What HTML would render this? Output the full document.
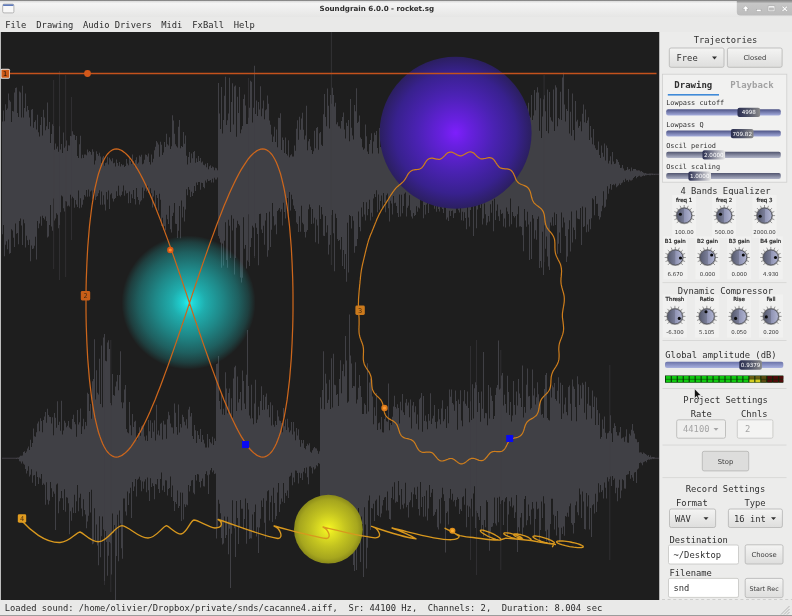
<!DOCTYPE html>
<html lang="en"><head><meta charset="utf-8"><title>Soundgrain 6.0.0 - rocket.sg</title>
<style>html,body{margin:0;padding:0;background:#e9e9e8;overflow:hidden}svg{display:block;will-change:transform}text{white-space:pre}</style></head><body>
<svg width="792" height="616" viewBox="0 0 792 616">
<defs>
<linearGradient id="gTitle" x1="0" y1="0" x2="0" y2="1"><stop offset="0" stop-color="#a8a8a8"/><stop offset="0.08" stop-color="#dedede"/><stop offset="0.2" stop-color="#f4f4f4"/><stop offset="1" stop-color="#e6e6e5"/></linearGradient>
<radialGradient id="gPurple" cx="0.5" cy="0.5" r="0.5"><stop offset="0" stop-color="#7e1ffc"/><stop offset="0.18" stop-color="#6820e0"/><stop offset="0.5" stop-color="#4b22b4"/><stop offset="0.8" stop-color="#38218e"/><stop offset="1" stop-color="#2b1f60"/></radialGradient>
<radialGradient id="gCyan" cx="0.5" cy="0.5" r="0.5"><stop offset="0" stop-color="#24f2f2" stop-opacity="1"/><stop offset="0.08" stop-color="#20eaea" stop-opacity="0.9"/><stop offset="0.25" stop-color="#20eaea" stop-opacity="0.7"/><stop offset="0.5" stop-color="#20eaea" stop-opacity="0.52"/><stop offset="0.75" stop-color="#20eaea" stop-opacity="0.32"/><stop offset="0.9" stop-color="#20eaea" stop-opacity="0.16"/><stop offset="0.97" stop-color="#20eaea" stop-opacity="0.05"/><stop offset="1" stop-color="#20eaea" stop-opacity="0"/></radialGradient>
<radialGradient id="gYellow" cx="0.5" cy="0.5" r="0.5"><stop offset="0" stop-color="#fcfc24"/><stop offset="0.15" stop-color="#e8e822"/><stop offset="0.5" stop-color="#c4c420"/><stop offset="0.85" stop-color="#a6a61e"/><stop offset="1" stop-color="#8a8a1a"/></radialGradient>
<linearGradient id="gTrk1" x1="0" y1="0" x2="0" y2="1"><stop offset="0" stop-color="#4c5284"/><stop offset="1" stop-color="#a4acdc"/></linearGradient>
<linearGradient id="gTrk2" x1="0" y1="0" x2="0" y2="1"><stop offset="0" stop-color="#50546e"/><stop offset="1" stop-color="#b0b4c8"/></linearGradient>
<linearGradient id="gTrk3" x1="0" y1="0" x2="0" y2="1"><stop offset="0" stop-color="#6a72a8"/><stop offset="1" stop-color="#aab2e0"/></linearGradient>
<linearGradient id="gKnobA" x1="0" y1="0" x2="1" y2="0"><stop offset="0" stop-color="#2a2e50"/><stop offset="0.5" stop-color="#505468"/><stop offset="1" stop-color="#8a8a8a"/></linearGradient>
<linearGradient id="gKnobB" x1="0" y1="0" x2="1" y2="0"><stop offset="0" stop-color="#2a2e50"/><stop offset="0.5" stop-color="#8a8c9c"/><stop offset="1" stop-color="#e8e8e8"/></linearGradient>
<linearGradient id="gDial" x1="0" y1="0" x2="1" y2="0"><stop offset="0" stop-color="#565a6e"/><stop offset="0.5" stop-color="#7a7e98"/><stop offset="0.52" stop-color="#9094b4"/><stop offset="1" stop-color="#b2b6d2"/></linearGradient>
<linearGradient id="gBtn" x1="0" y1="0" x2="0" y2="1"><stop offset="0" stop-color="#f4f4f3"/><stop offset="1" stop-color="#dededd"/></linearGradient>
</defs>
<rect x="0" y="0" width="792" height="616" fill="#e9e9e8"/>
<rect x="0" y="0" width="792" height="17" fill="url(#gTitle)"/>
<rect x="0" y="0" width="792" height="0.8" fill="#7c7c7c"/>
<text x="376.8" y="10.9" font-family='"DejaVu Sans","Liberation Sans",sans-serif' font-weight="bold" font-size="7.15" fill="#2e2e2e" text-anchor="middle">Soundgrain 6.0.0 - rocket.sg</text>
<rect x="2.7" y="4.1" width="11.2" height="8.8" rx="1.3" fill="#f8f8f8" stroke="#a4a4a4" stroke-width="0.8"/><rect x="3.1" y="4.4" width="10.4" height="1.5" fill="#4e6cb4"/>
<linearGradient id="gWB" x1="0" y1="0" x2="0" y2="1"><stop offset="0" stop-color="#8c8c8c"/><stop offset="0.18" stop-color="#c6c6c6"/><stop offset="1" stop-color="#bcbcbc"/></linearGradient>
<path d="M736.8 0.8 H792 V15.6 H740.5 Q736.8 15.6 736.8 12 Z" fill="url(#gWB)"/>
<g fill="#ffffff" stroke="#8e8e8e" stroke-width="0.35"><path d="M745.7 5.8l3.2 3.2h-2v2.4h-2.4v-2.4h-2z"/><rect x="756.4" y="9.3" width="4.6" height="2.2"/><path d="M768.2 5.9h6.5v5.6h-6.5zM769.4 7.8v2.5h4.1v-2.5z" fill-rule="evenodd"/><path d="M781.8 6.9l1-1 1.95 1.95 1.95-1.95 1 1-1.95 1.95 1.95 1.95-1 1-1.95-1.95-1.95 1.95-1-1 1.95-1.95z"/></g>
<rect x="0" y="17" width="792" height="15" fill="#e9e9e8"/>
<text x="5.2" y="27.5" font-family='"DejaVu Sans Mono","Liberation Mono",monospace' font-size="8.8" fill="#2a2a2a">File</text>
<text x="36.3" y="27.5" font-family='"DejaVu Sans Mono","Liberation Mono",monospace' font-size="8.8" fill="#2a2a2a">Drawing</text>
<text x="83" y="27.5" font-family='"DejaVu Sans Mono","Liberation Mono",monospace' font-size="8.8" fill="#2a2a2a">Audio Drivers</text>
<text x="161.2" y="27.5" font-family='"DejaVu Sans Mono","Liberation Mono",monospace' font-size="8.8" fill="#2a2a2a">Midi</text>
<text x="192.3" y="27.5" font-family='"DejaVu Sans Mono","Liberation Mono",monospace' font-size="8.8" fill="#2a2a2a">FxBall</text>
<text x="233.7" y="27.5" font-family='"DejaVu Sans Mono","Liberation Mono",monospace' font-size="8.8" fill="#2a2a2a">Help</text>
<rect x="0" y="32" width="1" height="568" fill="#bdbdbd"/>
<rect x="1" y="32" width="658.5" height="568" fill="#1e1e1e"/>
<clipPath id="cv"><rect x="1" y="32" width="658.5" height="568"/></clipPath>
<g clip-path="url(#cv)">
<filter id="wb" x="0" y="30" width="662" height="572" filterUnits="userSpaceOnUse"><feGaussianBlur stdDeviation="0.42 0.3"/></filter><g filter="url(#wb)">
<path d="M2.0 121.4 L3.0 121.4 L3.0 110.4 L4.0 110.4 L4.0 121.2 L5.0 121.2 L5.0 104.2 L6.0 104.2 L6.0 110.1 L7.0 110.1 L7.0 108.4 L8.0 108.4 L8.0 93.4 L9.0 93.4 L9.0 100.3 L10.0 100.3 L10.0 101.7 L11.0 101.7 L11.0 122.1 L12.0 122.1 L12.0 111.0 L13.0 111.0 L13.0 111.4 L14.0 111.4 L14.0 92.6 L15.0 92.6 L15.0 88.0 L16.0 88.0 L16.0 87.6 L17.0 87.6 L17.0 113.0 L18.0 113.0 L18.0 117.0 L19.0 117.0 L19.0 91.5 L20.0 91.5 L20.0 92.6 L21.0 92.6 L21.0 117.4 L22.0 117.4 L22.0 85.7 L23.0 85.7 L23.0 117.6 L24.0 117.6 L24.0 108.1 L25.0 108.1 L25.0 93.6 L26.0 93.6 L26.0 111.5 L27.0 111.5 L27.0 105.9 L28.0 105.9 L28.0 110.1 L29.0 110.1 L29.0 117.6 L30.0 117.6 L30.0 126.2 L31.0 126.2 L31.0 109.7 L32.0 109.7 L32.0 109.1 L33.0 109.1 L33.0 127.7 L34.0 127.7 L34.0 122.1 L35.0 122.1 L35.0 120.3 L36.0 120.3 L36.0 129.4 L37.0 129.4 L37.0 114.7 L38.0 114.7 L38.0 132.2 L39.0 132.2 L39.0 136.4 L40.0 136.4 L40.0 124.9 L41.0 124.9 L41.0 117.0 L42.0 117.0 L42.0 135.5 L43.0 135.5 L43.0 109.8 L44.0 109.8 L44.0 117.4 L45.0 117.4 L45.0 130.2 L46.0 130.2 L46.0 126.3 L47.0 126.3 L47.0 102.4 L48.0 102.4 L48.0 129.1 L49.0 129.1 L49.0 122.1 L50.0 122.1 L50.0 143.0 L51.0 143.0 L51.0 133.9 L52.0 133.9 L52.0 124.3 L53.0 124.3 L53.0 125.9 L54.0 125.9 L54.0 149.8 L55.0 149.8 L55.0 143.6 L56.0 143.6 L56.0 148.8 L57.0 148.8 L57.0 146.6 L58.0 146.6 L58.0 151.8 L59.0 151.8 L59.0 126.2 L60.0 126.2 L60.0 149.5 L61.0 149.5 L61.0 144.0 L62.0 144.0 L62.0 153.1 L63.0 153.1 L63.0 132.5 L64.0 132.5 L64.0 147.8 L65.0 147.8 L65.0 146.3 L66.0 146.3 L66.0 140.4 L67.0 140.4 L67.0 150.9 L68.0 150.9 L68.0 145.2 L69.0 145.2 L69.0 145.4 L70.0 145.4 L70.0 136.0 L71.0 136.0 L71.0 136.3 L72.0 136.3 L72.0 131.2 L73.0 131.2 L73.0 134.6 L74.0 134.6 L74.0 134.9 L75.0 134.9 L75.0 140.0 L76.0 140.0 L76.0 135.9 L77.0 135.9 L77.0 156.1 L78.0 156.1 L78.0 158.1 L79.0 158.1 L79.0 144.3 L80.0 144.3 L80.0 135.7 L81.0 135.7 L81.0 158.3 L82.0 158.3 L82.0 154.7 L83.0 154.7 L83.0 158.0 L84.0 158.0 L84.0 154.5 L85.0 154.5 L85.0 154.6 L86.0 154.6 L86.0 155.2 L87.0 155.2 L87.0 149.4 L88.0 149.4 L88.0 152.2 L89.0 152.2 L89.0 150.9 L90.0 150.9 L90.0 152.0 L91.0 152.0 L91.0 154.8 L92.0 154.8 L92.0 149.2 L93.0 149.2 L93.0 151.7 L94.0 151.7 L94.0 164.4 L95.0 164.4 L95.0 160.5 L96.0 160.5 L96.0 151.3 L97.0 151.3 L97.0 153.9 L98.0 153.9 L98.0 155.8 L99.0 155.8 L99.0 152.7 L100.0 152.7 L100.0 156.5 L101.0 156.5 L101.0 163.1 L102.0 163.1 L102.0 157.5 L103.0 157.5 L103.0 155.9 L104.0 155.9 L104.0 165.7 L105.0 165.7 L105.0 163.0 L106.0 163.0 L106.0 162.4 L107.0 162.4 L107.0 156.7 L108.0 156.7 L108.0 164.6 L109.0 164.6 L109.0 157.8 L110.0 157.8 L110.0 159.5 L111.0 159.5 L111.0 161.2 L112.0 161.2 L112.0 158.2 L113.0 158.2 L113.0 163.3 L114.0 163.3 L114.0 162.8 L115.0 162.8 L115.0 166.6 L116.0 166.6 L116.0 159.5 L117.0 159.5 L117.0 163.0 L118.0 163.0 L118.0 165.8 L119.0 165.8 L119.0 161.9 L120.0 161.9 L120.0 166.6 L121.0 166.6 L121.0 164.1 L122.0 164.1 L122.0 165.3 L123.0 165.3 L123.0 164.8 L124.0 164.8 L124.0 166.9 L125.0 166.9 L125.0 165.9 L126.0 165.9 L126.0 159.0 L127.0 159.0 L127.0 163.4 L128.0 163.4 L128.0 165.3 L129.0 165.3 L129.0 157.4 L130.0 157.4 L130.0 160.9 L131.0 160.9 L131.0 163.9 L132.0 163.9 L132.0 154.6 L133.0 154.6 L133.0 161.1 L134.0 161.1 L134.0 166.3 L135.0 166.3 L135.0 160.1 L136.0 160.1 L136.0 157.2 L137.0 157.2 L137.0 163.8 L138.0 163.8 L138.0 162.6 L139.0 162.6 L139.0 155.5 L140.0 155.5 L140.0 156.7 L141.0 156.7 L141.0 154.7 L142.0 154.7 L142.0 164.3 L143.0 164.3 L143.0 163.5 L144.0 163.5 L144.0 159.8 L145.0 159.8 L145.0 154.6 L146.0 154.6 L146.0 154.9 L147.0 154.9 L147.0 156.6 L148.0 156.6 L148.0 153.6 L149.0 153.6 L149.0 162.0 L150.0 162.0 L150.0 164.4 L151.0 164.4 L151.0 154.6 L152.0 154.6 L152.0 162.3 L153.0 162.3 L153.0 158.8 L154.0 158.8 L154.0 150.2 L155.0 150.2 L155.0 146.8 L156.0 146.8 L156.0 141.0 L157.0 141.0 L157.0 142.5 L158.0 142.5 L158.0 144.5 L159.0 144.5 L159.0 156.7 L160.0 156.7 L160.0 141.7 L161.0 141.7 L161.0 144.8 L162.0 144.8 L162.0 154.9 L163.0 154.9 L163.0 152.4 L164.0 152.4 L164.0 142.0 L165.0 142.0 L165.0 147.0 L166.0 147.0 L166.0 133.8 L167.0 133.8 L167.0 144.2 L168.0 144.2 L168.0 145.6 L169.0 145.6 L169.0 137.3 L170.0 137.3 L170.0 149.0 L171.0 149.0 L171.0 146.2 L172.0 146.2 L172.0 115.3 L173.0 115.3 L173.0 120.6 L174.0 120.6 L174.0 133.7 L175.0 133.7 L175.0 144.3 L176.0 144.3 L176.0 146.3 L177.0 146.3 L177.0 147.4 L178.0 147.4 L178.0 126.7 L179.0 126.7 L179.0 120.0 L180.0 120.0 L180.0 148.3 L181.0 148.3 L181.0 146.0 L182.0 146.0 L182.0 146.9 L183.0 146.9 L183.0 132.0 L184.0 132.0 L184.0 143.8 L185.0 143.8 L185.0 135.4 L186.0 135.4 L186.0 155.8 L187.0 155.8 L187.0 164.6 L188.0 164.6 L188.0 157.1 L189.0 157.1 L189.0 152.0 L190.0 152.0 L190.0 162.8 L191.0 162.8 L191.0 153.5 L192.0 153.5 L192.0 158.3 L193.0 158.3 L193.0 152.0 L194.0 152.0 L194.0 151.0 L195.0 151.0 L195.0 162.7 L196.0 162.7 L196.0 158.3 L197.0 158.3 L197.0 162.0 L198.0 162.0 L198.0 156.0 L199.0 156.0 L199.0 161.1 L200.0 161.1 L200.0 157.9 L201.0 157.9 L201.0 162.6 L202.0 162.6 L202.0 161.5 L203.0 161.5 L203.0 164.7 L204.0 164.7 L204.0 165.2 L205.0 165.2 L205.0 163.7 L206.0 163.7 L206.0 167.2 L207.0 167.2 L207.0 162.9 L208.0 162.9 L208.0 169.3 L209.0 169.3 L209.0 166.3 L210.0 166.3 L210.0 165.2 L211.0 165.2 L211.0 168.1 L212.0 168.1 L212.0 166.5 L213.0 166.5 L213.0 167.2 L214.0 167.2 L214.0 170.2 L215.0 170.2 L215.0 167.8 L216.0 167.8 L216.0 168.3 L217.0 168.3 L217.0 170.3 L218.0 170.3 L218.0 83.0 L219.0 83.0 L219.0 113.4 L220.0 113.4 L220.0 128.9 L221.0 128.9 L221.0 86.9 L222.0 86.9 L222.0 133.6 L223.0 133.6 L223.0 119.9 L224.0 119.9 L224.0 95.8 L225.0 95.8 L225.0 76.8 L226.0 76.8 L226.0 125.1 L227.0 125.1 L227.0 120.2 L228.0 120.2 L228.0 113.5 L229.0 113.5 L229.0 77.8 L230.0 77.8 L230.0 132.1 L231.0 132.1 L231.0 102.0 L232.0 102.0 L232.0 83.3 L233.0 83.3 L233.0 124.6 L234.0 124.6 L234.0 86.4 L235.0 86.4 L235.0 85.5 L236.0 85.5 L236.0 136.8 L237.0 136.8 L237.0 96.7 L238.0 96.7 L238.0 112.9 L239.0 112.9 L239.0 87.1 L240.0 87.1 L240.0 133.3 L241.0 133.3 L241.0 129.6 L242.0 129.6 L242.0 126.0 L243.0 126.0 L243.0 98.9 L244.0 98.9 L244.0 94.4 L245.0 94.4 L245.0 105.4 L246.0 105.4 L246.0 123.9 L247.0 123.9 L247.0 124.0 L248.0 124.0 L248.0 117.8 L249.0 117.8 L249.0 107.7 L250.0 107.7 L250.0 80.7 L251.0 80.7 L251.0 81.7 L252.0 81.7 L252.0 122.4 L253.0 122.4 L253.0 107.8 L254.0 107.8 L254.0 65.7 L255.0 65.7 L255.0 113.9 L256.0 113.9 L256.0 100.5 L257.0 100.5 L257.0 116.1 L258.0 116.1 L258.0 102.1 L259.0 102.1 L259.0 109.6 L260.0 109.6 L260.0 86.3 L261.0 86.3 L261.0 116.3 L262.0 116.3 L262.0 108.4 L263.0 108.4 L263.0 100.5 L264.0 100.5 L264.0 119.2 L265.0 119.2 L265.0 110.2 L266.0 110.2 L266.0 109.3 L267.0 109.3 L267.0 95.6 L268.0 95.6 L268.0 103.8 L269.0 103.8 L269.0 120.6 L270.0 120.6 L270.0 124.8 L271.0 124.8 L271.0 134.5 L272.0 134.5 L272.0 142.0 L273.0 142.0 L273.0 136.6 L274.0 136.6 L274.0 126.7 L275.0 126.7 L275.0 142.1 L276.0 142.1 L276.0 129.4 L277.0 129.4 L277.0 147.3 L278.0 147.3 L278.0 117.7 L279.0 117.7 L279.0 117.9 L280.0 117.9 L280.0 113.2 L281.0 113.2 L281.0 150.0 L282.0 150.0 L282.0 137.6 L283.0 137.6 L283.0 140.1 L284.0 140.1 L284.0 152.9 L285.0 152.9 L285.0 137.6 L286.0 137.6 L286.0 153.9 L287.0 153.9 L287.0 155.4 L288.0 155.4 L288.0 140.3 L289.0 140.3 L289.0 157.3 L290.0 157.3 L290.0 155.2 L291.0 155.2 L291.0 154.3 L292.0 154.3 L292.0 156.4 L293.0 156.4 L293.0 156.6 L294.0 156.6 L294.0 145.4 L295.0 145.4 L295.0 150.7 L296.0 150.7 L296.0 128.8 L297.0 128.8 L297.0 120.3 L298.0 120.3 L298.0 139.7 L299.0 139.7 L299.0 116.8 L300.0 116.8 L300.0 129.8 L301.0 129.8 L301.0 118.6 L302.0 118.6 L302.0 112.7 L303.0 112.7 L303.0 129.7 L304.0 129.7 L304.0 139.5 L305.0 139.5 L305.0 135.5 L306.0 135.5 L306.0 105.8 L307.0 105.8 L307.0 150.3 L308.0 150.3 L308.0 141.3 L309.0 141.3 L309.0 139.0 L310.0 139.0 L310.0 146.4 L311.0 146.4 L311.0 150.1 L312.0 150.1 L312.0 153.9 L313.0 153.9 L313.0 151.2 L314.0 151.2 L314.0 130.7 L315.0 130.7 L315.0 148.2 L316.0 148.2 L316.0 128.0 L317.0 128.0 L317.0 127.1 L318.0 127.1 L318.0 149.7 L319.0 149.7 L319.0 133.2 L320.0 133.2 L320.0 132.0 L321.0 132.0 L321.0 144.7 L322.0 144.7 L322.0 145.9 L323.0 145.9 L323.0 114.2 L324.0 114.2 L324.0 94.0 L325.0 94.0 L325.0 117.1 L326.0 117.1 L326.0 126.2 L327.0 126.2 L327.0 88.5 L328.0 88.5 L328.0 105.8 L329.0 105.8 L329.0 128.4 L330.0 128.4 L330.0 95.1 L331.0 95.1 L331.0 103.8 L332.0 103.8 L332.0 87.8 L333.0 87.8 L333.0 95.0 L334.0 95.0 L334.0 106.4 L335.0 106.4 L335.0 102.8 L336.0 102.8 L336.0 124.2 L337.0 124.2 L337.0 122.2 L338.0 122.2 L338.0 126.3 L339.0 126.3 L339.0 126.2 L340.0 126.2 L340.0 128.4 L341.0 128.4 L341.0 121.0 L342.0 121.0 L342.0 117.0 L343.0 117.0 L343.0 112.4 L344.0 112.4 L344.0 129.5 L345.0 129.5 L345.0 138.5 L346.0 138.5 L346.0 122.8 L347.0 122.8 L347.0 126.0 L348.0 126.0 L348.0 120.1 L349.0 120.1 L349.0 141.2 L350.0 141.2 L350.0 99.0 L351.0 99.0 L351.0 127.7 L352.0 127.7 L352.0 135.6 L353.0 135.6 L353.0 139.4 L354.0 139.4 L354.0 104.9 L355.0 104.9 L355.0 111.3 L356.0 111.3 L356.0 88.2 L357.0 88.2 L357.0 123.1 L358.0 123.1 L358.0 121.8 L359.0 121.8 L359.0 115.6 L360.0 115.6 L360.0 137.6 L361.0 137.6 L361.0 139.1 L362.0 139.1 L362.0 147.3 L363.0 147.3 L363.0 149.8 L364.0 149.8 L364.0 148.4 L365.0 148.4 L365.0 124.6 L366.0 124.6 L366.0 136.2 L367.0 136.2 L367.0 151.5 L368.0 151.5 L368.0 154.1 L369.0 154.1 L369.0 143.9 L370.0 143.9 L370.0 140.1 L371.0 140.1 L371.0 133.2 L372.0 133.2 L372.0 153.6 L373.0 153.6 L373.0 141.6 L374.0 141.6 L374.0 132.8 L375.0 132.8 L375.0 135.0 L376.0 135.0 L376.0 131.1 L377.0 131.1 L377.0 147.9 L378.0 147.9 L378.0 153.4 L379.0 153.4 L379.0 128.1 L380.0 128.1 L380.0 146.9 L381.0 146.9 L381.0 143.9 L382.0 143.9 L382.0 127.1 L383.0 127.1 L383.0 148.1 L384.0 148.1 L384.0 128.2 L385.0 128.2 L385.0 143.3 L386.0 143.3 L386.0 147.6 L387.0 147.6 L387.0 147.3 L388.0 147.3 L388.0 145.2 L389.0 145.2 L389.0 149.6 L390.0 149.6 L390.0 147.4 L391.0 147.4 L391.0 148.5 L392.0 148.5 L392.0 149.5 L393.0 149.5 L393.0 136.7 L394.0 136.7 L394.0 134.7 L395.0 134.7 L395.0 134.8 L396.0 134.8 L396.0 156.5 L397.0 156.5 L397.0 145.5 L398.0 145.5 L398.0 130.3 L399.0 130.3 L399.0 135.3 L400.0 135.3 L400.0 133.6 L401.0 133.6 L401.0 154.8 L402.0 154.8 L402.0 144.2 L403.0 144.2 L403.0 137.4 L404.0 137.4 L404.0 130.8 L405.0 130.8 L405.0 148.6 L406.0 148.6 L406.0 125.1 L407.0 125.1 L407.0 136.7 L408.0 136.7 L408.0 128.2 L409.0 128.2 L409.0 151.0 L410.0 151.0 L410.0 145.3 L411.0 145.3 L411.0 138.0 L412.0 138.0 L412.0 151.8 L413.0 151.8 L413.0 148.3 L414.0 148.3 L414.0 150.2 L415.0 150.2 L415.0 156.6 L416.0 156.6 L416.0 149.3 L417.0 149.3 L417.0 156.5 L418.0 156.5 L418.0 136.1 L419.0 136.1 L419.0 144.9 L420.0 144.9 L420.0 147.5 L421.0 147.5 L421.0 152.0 L422.0 152.0 L422.0 148.2 L423.0 148.2 L423.0 155.2 L424.0 155.2 L424.0 153.3 L425.0 153.3 L425.0 150.7 L426.0 150.7 L426.0 156.9 L427.0 156.9 L427.0 136.1 L428.0 136.1 L428.0 141.3 L429.0 141.3 L429.0 147.5 L430.0 147.5 L430.0 141.8 L431.0 141.8 L431.0 153.5 L432.0 153.5 L432.0 136.2 L433.0 136.2 L433.0 150.0 L434.0 150.0 L434.0 149.5 L435.0 149.5 L435.0 152.3 L436.0 152.3 L436.0 130.8 L437.0 130.8 L437.0 140.2 L438.0 140.2 L438.0 153.8 L439.0 153.8 L439.0 137.7 L440.0 137.7 L440.0 139.9 L441.0 139.9 L441.0 148.3 L442.0 148.3 L442.0 138.1 L443.0 138.1 L443.0 144.3 L444.0 144.3 L444.0 148.1 L445.0 148.1 L445.0 156.4 L446.0 156.4 L446.0 141.4 L447.0 141.4 L447.0 140.3 L448.0 140.3 L448.0 132.2 L449.0 132.2 L449.0 144.5 L450.0 144.5 L450.0 132.3 L451.0 132.3 L451.0 145.6 L452.0 145.6 L452.0 136.7 L453.0 136.7 L453.0 144.7 L454.0 144.7 L454.0 144.2 L455.0 144.2 L455.0 130.9 L456.0 130.9 L456.0 140.0 L457.0 140.0 L457.0 126.0 L458.0 126.0 L458.0 118.3 L459.0 118.3 L459.0 150.2 L460.0 150.2 L460.0 141.3 L461.0 141.3 L461.0 143.6 L462.0 143.6 L462.0 126.8 L463.0 126.8 L463.0 124.1 L464.0 124.1 L464.0 117.4 L465.0 117.4 L465.0 140.8 L466.0 140.8 L466.0 128.7 L467.0 128.7 L467.0 152.1 L468.0 152.1 L468.0 131.7 L469.0 131.7 L469.0 137.9 L470.0 137.9 L470.0 138.6 L471.0 138.6 L471.0 125.7 L472.0 125.7 L472.0 149.0 L473.0 149.0 L473.0 132.5 L474.0 132.5 L474.0 127.7 L475.0 127.7 L475.0 142.4 L476.0 142.4 L476.0 137.2 L477.0 137.2 L477.0 140.2 L478.0 140.2 L478.0 137.6 L479.0 137.6 L479.0 144.2 L480.0 144.2 L480.0 131.9 L481.0 131.9 L481.0 146.6 L482.0 146.6 L482.0 124.8 L483.0 124.8 L483.0 132.7 L484.0 132.7 L484.0 128.6 L485.0 128.6 L485.0 147.3 L486.0 147.3 L486.0 119.6 L487.0 119.6 L487.0 142.6 L488.0 142.6 L488.0 123.8 L489.0 123.8 L489.0 144.2 L490.0 144.2 L490.0 114.3 L491.0 114.3 L491.0 124.4 L492.0 124.4 L492.0 143.1 L493.0 143.1 L493.0 133.2 L494.0 133.2 L494.0 150.4 L495.0 150.4 L495.0 129.3 L496.0 129.3 L496.0 125.2 L497.0 125.2 L497.0 147.6 L498.0 147.6 L498.0 142.0 L499.0 142.0 L499.0 146.9 L500.0 146.9 L500.0 128.4 L501.0 128.4 L501.0 129.5 L502.0 129.5 L502.0 125.8 L503.0 125.8 L503.0 133.2 L504.0 133.2 L504.0 118.2 L505.0 118.2 L505.0 105.7 L506.0 105.7 L506.0 120.5 L507.0 120.5 L507.0 125.7 L508.0 125.7 L508.0 135.9 L509.0 135.9 L509.0 110.9 L510.0 110.9 L510.0 137.3 L511.0 137.3 L511.0 112.6 L512.0 112.6 L512.0 143.3 L513.0 143.3 L513.0 136.3 L514.0 136.3 L514.0 116.4 L515.0 116.4 L515.0 146.6 L516.0 146.6 L516.0 134.9 L517.0 134.9 L517.0 148.5 L518.0 148.5 L518.0 143.4 L519.0 143.4 L519.0 125.1 L520.0 125.1 L520.0 121.2 L521.0 121.2 L521.0 126.2 L522.0 126.2 L522.0 120.5 L523.0 120.5 L523.0 146.9 L524.0 146.9 L524.0 114.5 L525.0 114.5 L525.0 146.0 L526.0 146.0 L526.0 106.3 L527.0 106.3 L527.0 110.5 L528.0 110.5 L528.0 102.8 L529.0 102.8 L529.0 115.9 L530.0 115.9 L530.0 117.5 L531.0 117.5 L531.0 95.1 L532.0 95.1 L532.0 120.1 L533.0 120.1 L533.0 115.6 L534.0 115.6 L534.0 90.0 L535.0 90.0 L535.0 110.3 L536.0 110.3 L536.0 92.6 L537.0 92.6 L537.0 87.2 L538.0 87.2 L538.0 92.4 L539.0 92.4 L539.0 130.7 L540.0 130.7 L540.0 98.2 L541.0 98.2 L541.0 138.1 L542.0 138.1 L542.0 116.5 L543.0 116.5 L543.0 99.2 L544.0 99.2 L544.0 95.3 L545.0 95.3 L545.0 111.2 L546.0 111.2 L546.0 131.1 L547.0 131.1 L547.0 89.5 L548.0 89.5 L548.0 133.3 L549.0 133.3 L549.0 92.1 L550.0 92.1 L550.0 117.3 L551.0 117.3 L551.0 120.5 L552.0 120.5 L552.0 121.8 L553.0 121.8 L553.0 89.5 L554.0 89.5 L554.0 131.0 L555.0 131.0 L555.0 85.3 L556.0 85.3 L556.0 87.4 L557.0 87.4 L557.0 126.2 L558.0 126.2 L558.0 117.9 L559.0 117.9 L559.0 119.2 L560.0 119.2 L560.0 91.8 L561.0 91.8 L561.0 119.9 L562.0 119.9 L562.0 77.4 L563.0 77.4 L563.0 72.7 L564.0 72.7 L564.0 104.4 L565.0 104.4 L565.0 121.5 L566.0 121.5 L566.0 109.1 L567.0 109.1 L567.0 111.1 L568.0 111.1 L568.0 89.0 L569.0 89.0 L569.0 133.4 L570.0 133.4 L570.0 111.8 L571.0 111.8 L571.0 135.8 L572.0 135.8 L572.0 93.6 L573.0 93.6 L573.0 130.0 L574.0 130.0 L574.0 140.2 L575.0 140.2 L575.0 101.1 L576.0 101.1 L576.0 121.4 L577.0 121.4 L577.0 119.8 L578.0 119.8 L578.0 127.8 L579.0 127.8 L579.0 126.0 L580.0 126.0 L580.0 121.6 L581.0 121.6 L581.0 131.2 L582.0 131.2 L582.0 113.8 L583.0 113.8 L583.0 104.5 L584.0 104.5 L584.0 122.2 L585.0 122.2 L585.0 109.6 L586.0 109.6 L586.0 123.1 L587.0 123.1 L587.0 120.5 L588.0 120.5 L588.0 117.3 L589.0 117.3 L589.0 140.0 L590.0 140.0 L590.0 126.0 L591.0 126.0 L591.0 137.6 L592.0 137.6 L592.0 144.3 L593.0 144.3 L593.0 129.0 L594.0 129.0 L594.0 145.2 L595.0 145.2 L595.0 148.3 L596.0 148.3 L596.0 150.0 L597.0 150.0 L597.0 149.7 L598.0 149.7 L598.0 141.4 L599.0 141.4 L599.0 155.1 L600.0 155.1 L600.0 158.1 L601.0 158.1 L601.0 145.4 L602.0 145.4 L602.0 152.7 L603.0 152.7 L603.0 156.8 L604.0 156.8 L604.0 143.6 L605.0 143.6 L605.0 160.4 L606.0 160.4 L606.0 145.5 L607.0 145.5 L607.0 147.9 L608.0 147.9 L608.0 163.4 L609.0 163.4 L609.0 160.7 L610.0 160.7 L610.0 156.3 L611.0 156.3 L611.0 164.3 L612.0 164.3 L612.0 151.9 L613.0 151.9 L613.0 161.6 L614.0 161.6 L614.0 164.0 L615.0 164.0 L615.0 163.5 L616.0 163.5 L616.0 159.0 L617.0 159.0 L617.0 159.8 L618.0 159.8 L618.0 161.9 L619.0 161.9 L619.0 164.8 L620.0 164.8 L620.0 168.1 L621.0 168.1 L621.0 167.7 L622.0 167.7 L622.0 165.1 L623.0 165.1 L623.0 168.5 L624.0 168.5 L624.0 170.6 L625.0 170.6 L625.0 170.6 L626.0 170.6 L626.0 170.1 L627.0 170.1 L627.0 167.0 L628.0 167.0 L628.0 169.5 L629.0 169.5 L629.0 169.0 L630.0 169.0 L630.0 171.2 L631.0 171.2 L631.0 167.6 L632.0 167.6 L632.0 170.8 L633.0 170.8 L633.0 168.9 L634.0 168.9 L634.0 169.1 L635.0 169.1 L635.0 169.0 L636.0 169.0 L636.0 170.3 L637.0 170.3 L637.0 170.5 L638.0 170.5 L638.0 170.2 L639.0 170.2 L639.0 170.4 L640.0 170.4 L640.0 171.4 L641.0 171.4 L641.0 171.1 L642.0 171.1 L642.0 171.9 L643.0 171.9 L643.0 172.7 L644.0 172.7 L644.0 173.2 L645.0 173.2 L645.0 173.0 L646.0 173.0 L646.0 173.6 L647.0 173.6 L647.0 173.7 L648.0 173.7 L648.0 173.8 L649.0 173.8 L649.0 173.6 L650.0 173.6 L650.0 173.4 L651.0 173.4 L651.0 173.4 L652.0 173.4 L652.0 173.4 L653.0 173.4 L653.0 173.8 L654.0 173.8 L654.0 173.8 L655.0 173.8 L655.0 173.8 L656.0 173.8 L656.0 173.8 L657.0 173.8 L657.0 173.8 L658.0 173.8 L658.0 173.8 L659.0 173.8 L659.0 174.8 L658.0 174.8 L658.0 174.8 L657.0 174.8 L657.0 174.8 L656.0 174.8 L656.0 174.8 L655.0 174.8 L655.0 175.1 L654.0 175.1 L654.0 174.8 L653.0 174.8 L653.0 175.0 L652.0 175.0 L652.0 174.8 L651.0 174.8 L651.0 175.2 L650.0 175.2 L650.0 175.2 L649.0 175.2 L649.0 175.0 L648.0 175.0 L648.0 174.9 L647.0 174.9 L647.0 175.3 L646.0 175.3 L646.0 175.3 L645.0 175.3 L645.0 176.0 L644.0 176.0 L644.0 175.5 L643.0 175.5 L643.0 176.1 L642.0 176.1 L642.0 176.7 L641.0 176.7 L641.0 176.7 L640.0 176.7 L640.0 175.7 L639.0 175.7 L639.0 176.2 L638.0 176.2 L638.0 177.0 L637.0 177.0 L637.0 178.3 L636.0 178.3 L636.0 176.1 L635.0 176.1 L635.0 177.0 L634.0 177.0 L634.0 178.1 L633.0 178.1 L633.0 179.7 L632.0 179.7 L632.0 180.5 L631.0 180.5 L631.0 180.6 L630.0 180.6 L630.0 179.7 L629.0 179.7 L629.0 181.7 L628.0 181.7 L628.0 179.9 L627.0 179.9 L627.0 180.4 L626.0 180.4 L626.0 178.8 L625.0 178.8 L625.0 182.1 L624.0 182.1 L624.0 180.2 L623.0 180.2 L623.0 182.6 L622.0 182.6 L622.0 183.3 L621.0 183.3 L621.0 184.9 L620.0 184.9 L620.0 183.6 L619.0 183.6 L619.0 185.2 L618.0 185.2 L618.0 186.2 L617.0 186.2 L617.0 187.3 L616.0 187.3 L616.0 183.8 L615.0 183.8 L615.0 185.2 L614.0 185.2 L614.0 184.2 L613.0 184.2 L613.0 185.1 L612.0 185.1 L612.0 189.8 L611.0 189.8 L611.0 183.9 L610.0 183.9 L610.0 188.7 L609.0 188.7 L609.0 193.8 L608.0 193.8 L608.0 186.2 L607.0 186.2 L607.0 199.5 L606.0 199.5 L606.0 206.7 L605.0 206.7 L605.0 207.8 L604.0 207.8 L604.0 191.3 L603.0 191.3 L603.0 205.8 L602.0 205.8 L602.0 211.3 L601.0 211.3 L601.0 217.3 L600.0 217.3 L600.0 219.5 L599.0 219.5 L599.0 215.9 L598.0 215.9 L598.0 203.7 L597.0 203.7 L597.0 204.1 L596.0 204.1 L596.0 196.1 L595.0 196.1 L595.0 215.3 L594.0 215.3 L594.0 199.4 L593.0 199.4 L593.0 198.2 L592.0 198.2 L592.0 218.2 L591.0 218.2 L591.0 229.2 L590.0 229.2 L590.0 219.2 L589.0 219.2 L589.0 231.8 L588.0 231.8 L588.0 224.4 L587.0 224.4 L587.0 232.2 L586.0 232.2 L586.0 207.4 L585.0 207.4 L585.0 226.3 L584.0 226.3 L584.0 227.1 L583.0 227.1 L583.0 206.6 L582.0 206.6 L582.0 244.9 L581.0 244.9 L581.0 207.9 L580.0 207.9 L580.0 219.3 L579.0 219.3 L579.0 218.9 L578.0 218.9 L578.0 218.5 L577.0 218.5 L577.0 210.5 L576.0 210.5 L576.0 239.3 L575.0 239.3 L575.0 230.1 L574.0 230.1 L574.0 227.5 L573.0 227.5 L573.0 242.6 L572.0 242.6 L572.0 211.5 L571.0 211.5 L571.0 251.5 L570.0 251.5 L570.0 220.3 L569.0 220.3 L569.0 229.2 L568.0 229.2 L568.0 256.4 L567.0 256.4 L567.0 262.0 L566.0 262.0 L566.0 235.9 L565.0 235.9 L565.0 222.6 L564.0 222.6 L564.0 217.4 L563.0 217.4 L563.0 227.4 L562.0 227.4 L562.0 212.6 L561.0 212.6 L561.0 253.1 L560.0 253.1 L560.0 232.4 L559.0 232.4 L559.0 243.8 L558.0 243.8 L558.0 253.7 L557.0 253.7 L557.0 214.0 L556.0 214.0 L556.0 225.0 L555.0 225.0 L555.0 212.6 L554.0 212.6 L554.0 225.7 L553.0 225.7 L553.0 217.3 L552.0 217.3 L552.0 225.5 L551.0 225.5 L551.0 222.4 L550.0 222.4 L550.0 270.1 L549.0 270.1 L549.0 266.6 L548.0 266.6 L548.0 256.4 L547.0 256.4 L547.0 236.5 L546.0 236.5 L546.0 248.8 L545.0 248.8 L545.0 225.3 L544.0 225.3 L544.0 275.0 L543.0 275.0 L543.0 231.7 L542.0 231.7 L542.0 267.4 L541.0 267.4 L541.0 260.9 L540.0 260.9 L540.0 267.9 L539.0 267.9 L539.0 216.4 L538.0 216.4 L538.0 218.9 L537.0 218.9 L537.0 239.8 L536.0 239.8 L536.0 230.2 L535.0 230.2 L535.0 238.7 L534.0 238.7 L534.0 218.5 L533.0 218.5 L533.0 215.0 L532.0 215.0 L532.0 259.1 L531.0 259.1 L531.0 221.8 L530.0 221.8 L530.0 260.0 L529.0 260.0 L529.0 224.5 L528.0 224.5 L528.0 211.7 L527.0 211.7 L527.0 226.7 L526.0 226.7 L526.0 220.6 L525.0 220.6 L525.0 209.0 L524.0 209.0 L524.0 251.3 L523.0 251.3 L523.0 235.3 L522.0 235.3 L522.0 227.0 L521.0 227.0 L521.0 226.3 L520.0 226.3 L520.0 226.4 L519.0 226.4 L519.0 206.3 L518.0 206.3 L518.0 214.2 L517.0 214.2 L517.0 227.6 L516.0 227.6 L516.0 216.0 L515.0 216.0 L515.0 217.5 L514.0 217.5 L514.0 216.1 L513.0 216.1 L513.0 212.1 L512.0 212.1 L512.0 224.2 L511.0 224.2 L511.0 198.4 L510.0 198.4 L510.0 226.6 L509.0 226.6 L509.0 214.0 L508.0 214.0 L508.0 211.6 L507.0 211.6 L507.0 207.4 L506.0 207.4 L506.0 227.6 L505.0 227.6 L505.0 218.5 L504.0 218.5 L504.0 226.5 L503.0 226.5 L503.0 213.2 L502.0 213.2 L502.0 214.0 L501.0 214.0 L501.0 209.7 L500.0 209.7 L500.0 221.0 L499.0 221.0 L499.0 216.2 L498.0 216.2 L498.0 204.4 L497.0 204.4 L497.0 210.8 L496.0 210.8 L496.0 219.9 L495.0 219.9 L495.0 198.8 L494.0 198.8 L494.0 231.2 L493.0 231.2 L493.0 200.8 L492.0 200.8 L492.0 212.7 L491.0 212.7 L491.0 204.3 L490.0 204.3 L490.0 221.5 L489.0 221.5 L489.0 215.9 L488.0 215.9 L488.0 222.5 L487.0 222.5 L487.0 225.3 L486.0 225.3 L486.0 214.2 L485.0 214.2 L485.0 203.4 L484.0 203.4 L484.0 218.6 L483.0 218.6 L483.0 224.6 L482.0 224.6 L482.0 197.4 L481.0 197.4 L481.0 208.0 L480.0 208.0 L480.0 199.0 L479.0 199.0 L479.0 205.0 L478.0 205.0 L478.0 209.5 L477.0 209.5 L477.0 228.3 L476.0 228.3 L476.0 200.1 L475.0 200.1 L475.0 205.7 L474.0 205.7 L474.0 236.0 L473.0 236.0 L473.0 205.9 L472.0 205.9 L472.0 199.4 L471.0 199.4 L471.0 210.1 L470.0 210.1 L470.0 226.5 L469.0 226.5 L469.0 217.5 L468.0 217.5 L468.0 200.3 L467.0 200.3 L467.0 229.3 L466.0 229.3 L466.0 218.0 L465.0 218.0 L465.0 212.2 L464.0 212.2 L464.0 220.8 L463.0 220.8 L463.0 211.7 L462.0 211.7 L462.0 220.3 L461.0 220.3 L461.0 198.2 L460.0 198.2 L460.0 212.4 L459.0 212.4 L459.0 210.3 L458.0 210.3 L458.0 196.3 L457.0 196.3 L457.0 205.4 L456.0 205.4 L456.0 213.1 L455.0 213.1 L455.0 213.3 L454.0 213.3 L454.0 217.9 L453.0 217.9 L453.0 210.5 L452.0 210.5 L452.0 211.1 L451.0 211.1 L451.0 216.1 L450.0 216.1 L450.0 210.8 L449.0 210.8 L449.0 221.0 L448.0 221.0 L448.0 217.4 L447.0 217.4 L447.0 219.4 L446.0 219.4 L446.0 205.0 L445.0 205.0 L445.0 197.6 L444.0 197.6 L444.0 213.0 L443.0 213.0 L443.0 208.9 L442.0 208.9 L442.0 207.3 L441.0 207.3 L441.0 191.4 L440.0 191.4 L440.0 211.4 L439.0 211.4 L439.0 209.0 L438.0 209.0 L438.0 195.7 L437.0 195.7 L437.0 211.8 L436.0 211.8 L436.0 205.8 L435.0 205.8 L435.0 208.7 L434.0 208.7 L434.0 192.7 L433.0 192.7 L433.0 191.2 L432.0 191.2 L432.0 203.5 L431.0 203.5 L431.0 197.9 L430.0 197.9 L430.0 203.9 L429.0 203.9 L429.0 212.9 L428.0 212.9 L428.0 198.5 L427.0 198.5 L427.0 204.4 L426.0 204.4 L426.0 214.6 L425.0 214.6 L425.0 205.0 L424.0 205.0 L424.0 218.3 L423.0 218.3 L423.0 199.0 L422.0 199.0 L422.0 195.9 L421.0 195.9 L421.0 199.3 L420.0 199.3 L420.0 208.5 L419.0 208.5 L419.0 207.4 L418.0 207.4 L418.0 211.7 L417.0 211.7 L417.0 206.2 L416.0 206.2 L416.0 215.1 L415.0 215.1 L415.0 216.0 L414.0 216.0 L414.0 213.0 L413.0 213.0 L413.0 218.5 L412.0 218.5 L412.0 216.6 L411.0 216.6 L411.0 210.3 L410.0 210.3 L410.0 195.2 L409.0 195.2 L409.0 205.7 L408.0 205.7 L408.0 207.7 L407.0 207.7 L407.0 216.6 L406.0 216.6 L406.0 192.5 L405.0 192.5 L405.0 193.8 L404.0 193.8 L404.0 205.9 L403.0 205.9 L403.0 213.2 L402.0 213.2 L402.0 194.8 L401.0 194.8 L401.0 216.5 L400.0 216.5 L400.0 194.6 L399.0 194.6 L399.0 217.1 L398.0 217.1 L398.0 212.9 L397.0 212.9 L397.0 206.0 L396.0 206.0 L396.0 202.7 L395.0 202.7 L395.0 203.3 L394.0 203.3 L394.0 196.1 L393.0 196.1 L393.0 214.6 L392.0 214.6 L392.0 203.4 L391.0 203.4 L391.0 200.8 L390.0 200.8 L390.0 221.4 L389.0 221.4 L389.0 208.3 L388.0 208.3 L388.0 193.5 L387.0 193.5 L387.0 195.2 L386.0 195.2 L386.0 212.3 L385.0 212.3 L385.0 202.7 L384.0 202.7 L384.0 192.9 L383.0 192.9 L383.0 208.2 L382.0 208.2 L382.0 195.5 L381.0 195.5 L381.0 201.1 L380.0 201.1 L380.0 209.8 L379.0 209.8 L379.0 194.4 L378.0 194.4 L378.0 212.3 L377.0 212.3 L377.0 190.3 L376.0 190.3 L376.0 196.9 L375.0 196.9 L375.0 193.9 L374.0 193.9 L374.0 198.5 L373.0 198.5 L373.0 216.7 L372.0 216.7 L372.0 212.7 L371.0 212.7 L371.0 220.5 L370.0 220.5 L370.0 199.7 L369.0 199.7 L369.0 209.0 L368.0 209.0 L368.0 215.2 L367.0 215.2 L367.0 202.2 L366.0 202.2 L366.0 220.6 L365.0 220.6 L365.0 214.5 L364.0 214.5 L364.0 201.9 L363.0 201.9 L363.0 216.8 L362.0 216.8 L362.0 207.5 L361.0 207.5 L361.0 231.2 L360.0 231.2 L360.0 227.0 L359.0 227.0 L359.0 211.5 L358.0 211.5 L358.0 239.1 L357.0 239.1 L357.0 245.9 L356.0 245.9 L356.0 246.3 L355.0 246.3 L355.0 252.7 L354.0 252.7 L354.0 220.8 L353.0 220.8 L353.0 216.3 L352.0 216.3 L352.0 228.6 L351.0 228.6 L351.0 216.0 L350.0 216.0 L350.0 214.9 L349.0 214.9 L349.0 272.5 L348.0 272.5 L348.0 222.7 L347.0 222.7 L347.0 281.7 L346.0 281.7 L346.0 254.0 L345.0 254.0 L345.0 269.0 L344.0 269.0 L344.0 250.0 L343.0 250.0 L343.0 266.1 L342.0 266.1 L342.0 237.0 L341.0 237.0 L341.0 249.5 L340.0 249.5 L340.0 239.9 L339.0 239.9 L339.0 240.9 L338.0 240.9 L338.0 238.9 L337.0 238.9 L337.0 218.1 L336.0 218.1 L336.0 213.7 L335.0 213.7 L335.0 271.3 L334.0 271.3 L334.0 233.3 L333.0 233.3 L333.0 209.9 L332.0 209.9 L332.0 214.9 L331.0 214.9 L331.0 234.9 L330.0 234.9 L330.0 244.8 L329.0 244.8 L329.0 254.4 L328.0 254.4 L328.0 225.3 L327.0 225.3 L327.0 232.4 L326.0 232.4 L326.0 216.0 L325.0 216.0 L325.0 235.9 L324.0 235.9 L324.0 235.7 L323.0 235.7 L323.0 214.4 L322.0 214.4 L322.0 206.9 L321.0 206.9 L321.0 219.1 L320.0 219.1 L320.0 205.3 L319.0 205.3 L319.0 243.7 L318.0 243.7 L318.0 225.4 L317.0 225.4 L317.0 219.6 L316.0 219.6 L316.0 242.3 L315.0 242.3 L315.0 217.8 L314.0 217.8 L314.0 223.5 L313.0 223.5 L313.0 209.1 L312.0 209.1 L312.0 224.1 L311.0 224.1 L311.0 207.2 L310.0 207.2 L310.0 204.5 L309.0 204.5 L309.0 209.2 L308.0 209.2 L308.0 229.9 L307.0 229.9 L307.0 231.7 L306.0 231.7 L306.0 237.4 L305.0 237.4 L305.0 231.9 L304.0 231.9 L304.0 224.3 L303.0 224.3 L303.0 222.7 L302.0 222.7 L302.0 205.7 L301.0 205.7 L301.0 231.7 L300.0 231.7 L300.0 216.2 L299.0 216.2 L299.0 232.0 L298.0 232.0 L298.0 224.0 L297.0 224.0 L297.0 222.6 L296.0 222.6 L296.0 211.1 L295.0 211.1 L295.0 209.0 L294.0 209.0 L294.0 205.6 L293.0 205.6 L293.0 199.2 L292.0 199.2 L292.0 194.8 L291.0 194.8 L291.0 210.5 L290.0 210.5 L290.0 192.1 L289.0 192.1 L289.0 216.3 L288.0 216.3 L288.0 197.9 L287.0 197.9 L287.0 204.7 L286.0 204.7 L286.0 218.6 L285.0 218.6 L285.0 212.0 L284.0 212.0 L284.0 202.8 L283.0 202.8 L283.0 225.6 L282.0 225.6 L282.0 209.2 L281.0 209.2 L281.0 211.7 L280.0 211.7 L280.0 208.0 L279.0 208.0 L279.0 209.7 L278.0 209.7 L278.0 211.1 L277.0 211.1 L277.0 234.3 L276.0 234.3 L276.0 224.5 L275.0 224.5 L275.0 225.4 L274.0 225.4 L274.0 216.2 L273.0 216.2 L273.0 203.1 L272.0 203.1 L272.0 229.8 L271.0 229.8 L271.0 246.9 L270.0 246.9 L270.0 211.8 L269.0 211.8 L269.0 250.2 L268.0 250.2 L268.0 256.7 L267.0 256.7 L267.0 213.1 L266.0 213.1 L266.0 220.5 L265.0 220.5 L265.0 244.8 L264.0 244.8 L264.0 225.7 L263.0 225.7 L263.0 233.1 L262.0 233.1 L262.0 229.6 L261.0 229.6 L261.0 213.7 L260.0 213.7 L260.0 214.0 L259.0 214.0 L259.0 265.3 L258.0 265.3 L258.0 233.9 L257.0 233.9 L257.0 227.7 L256.0 227.7 L256.0 223.3 L255.0 223.3 L255.0 255.9 L254.0 255.9 L254.0 227.4 L253.0 227.4 L253.0 225.7 L252.0 225.7 L252.0 237.9 L251.0 237.9 L251.0 246.9 L250.0 246.9 L250.0 266.0 L249.0 266.0 L249.0 214.3 L248.0 214.3 L248.0 260.6 L247.0 260.6 L247.0 268.5 L246.0 268.5 L246.0 245.0 L245.0 245.0 L245.0 248.7 L244.0 248.7 L244.0 217.2 L243.0 217.2 L243.0 277.7 L242.0 277.7 L242.0 282.4 L241.0 282.4 L241.0 277.6 L240.0 277.6 L240.0 225.4 L239.0 225.4 L239.0 224.1 L238.0 224.1 L238.0 220.7 L237.0 220.7 L237.0 227.8 L236.0 227.8 L236.0 257.9 L235.0 257.9 L235.0 274.6 L234.0 274.6 L234.0 218.7 L233.0 218.7 L233.0 230.4 L232.0 230.4 L232.0 215.3 L231.0 215.3 L231.0 258.0 L230.0 258.0 L230.0 225.7 L229.0 225.7 L229.0 219.7 L228.0 219.7 L228.0 267.7 L227.0 267.7 L227.0 259.9 L226.0 259.9 L226.0 222.3 L225.0 222.3 L225.0 240.7 L224.0 240.7 L224.0 265.5 L223.0 265.5 L223.0 243.6 L222.0 243.6 L222.0 267.7 L221.0 267.7 L221.0 242.4 L220.0 242.4 L220.0 238.5 L219.0 238.5 L219.0 236.0 L218.0 236.0 L218.0 177.4 L217.0 177.4 L217.0 179.5 L216.0 179.5 L216.0 179.4 L215.0 179.4 L215.0 177.7 L214.0 177.7 L214.0 182.4 L213.0 182.4 L213.0 178.8 L212.0 178.8 L212.0 182.4 L211.0 182.4 L211.0 180.1 L210.0 180.1 L210.0 180.7 L209.0 180.7 L209.0 181.1 L208.0 181.1 L208.0 179.3 L207.0 179.3 L207.0 182.5 L206.0 182.5 L206.0 180.5 L205.0 180.5 L205.0 188.2 L204.0 188.2 L204.0 187.1 L203.0 187.1 L203.0 182.9 L202.0 182.9 L202.0 182.8 L201.0 182.8 L201.0 189.8 L200.0 189.8 L200.0 182.1 L199.0 182.1 L199.0 182.1 L198.0 182.1 L198.0 185.0 L197.0 185.0 L197.0 182.4 L196.0 182.4 L196.0 191.1 L195.0 191.1 L195.0 186.0 L194.0 186.0 L194.0 192.9 L193.0 192.9 L193.0 196.0 L192.0 196.0 L192.0 191.7 L191.0 191.7 L191.0 197.0 L190.0 197.0 L190.0 189.8 L189.0 189.8 L189.0 187.0 L188.0 187.0 L188.0 195.2 L187.0 195.2 L187.0 189.3 L186.0 189.3 L186.0 209.6 L185.0 209.6 L185.0 221.5 L184.0 221.5 L184.0 206.7 L183.0 206.7 L183.0 217.6 L182.0 217.6 L182.0 200.6 L181.0 200.6 L181.0 238.3 L180.0 238.3 L180.0 205.9 L179.0 205.9 L179.0 230.7 L178.0 230.7 L178.0 237.9 L177.0 237.9 L177.0 223.9 L176.0 223.9 L176.0 223.8 L175.0 223.8 L175.0 203.1 L174.0 203.1 L174.0 212.7 L173.0 212.7 L173.0 216.0 L172.0 216.0 L172.0 232.4 L171.0 232.4 L171.0 229.3 L170.0 229.3 L170.0 205.7 L169.0 205.7 L169.0 224.0 L168.0 224.0 L168.0 219.2 L167.0 219.2 L167.0 214.7 L166.0 214.7 L166.0 230.6 L165.0 230.6 L165.0 225.9 L164.0 225.9 L164.0 230.0 L163.0 230.0 L163.0 217.8 L162.0 217.8 L162.0 225.9 L161.0 225.9 L161.0 199.7 L160.0 199.7 L160.0 193.7 L159.0 193.7 L159.0 210.5 L158.0 210.5 L158.0 198.1 L157.0 198.1 L157.0 194.9 L156.0 194.9 L156.0 206.1 L155.0 206.1 L155.0 190.4 L154.0 190.4 L154.0 196.4 L153.0 196.4 L153.0 207.6 L152.0 207.6 L152.0 193.2 L151.0 193.2 L151.0 188.3 L150.0 188.3 L150.0 192.1 L149.0 192.1 L149.0 193.0 L148.0 193.0 L148.0 185.7 L147.0 185.7 L147.0 191.6 L146.0 191.6 L146.0 188.5 L145.0 188.5 L145.0 190.8 L144.0 190.8 L144.0 198.3 L143.0 198.3 L143.0 187.5 L142.0 187.5 L142.0 200.2 L141.0 200.2 L141.0 201.6 L140.0 201.6 L140.0 204.5 L139.0 204.5 L139.0 200.0 L138.0 200.0 L138.0 197.0 L137.0 197.0 L137.0 188.0 L136.0 188.0 L136.0 204.5 L135.0 204.5 L135.0 198.9 L134.0 198.9 L134.0 189.9 L133.0 189.9 L133.0 198.2 L132.0 198.2 L132.0 194.3 L131.0 194.3 L131.0 202.9 L130.0 202.9 L130.0 191.5 L129.0 191.5 L129.0 203.2 L128.0 203.2 L128.0 193.0 L127.0 193.0 L127.0 193.6 L126.0 193.6 L126.0 190.4 L125.0 190.4 L125.0 195.8 L124.0 195.8 L124.0 185.6 L123.0 185.6 L123.0 191.6 L122.0 191.6 L122.0 195.1 L121.0 195.1 L121.0 196.6 L120.0 196.6 L120.0 195.5 L119.0 195.5 L119.0 185.8 L118.0 185.8 L118.0 195.9 L117.0 195.9 L117.0 191.3 L116.0 191.3 L116.0 198.1 L115.0 198.1 L115.0 198.9 L114.0 198.9 L114.0 201.4 L113.0 201.4 L113.0 198.4 L112.0 198.4 L112.0 193.3 L111.0 193.3 L111.0 194.4 L110.0 194.4 L110.0 209.0 L109.0 209.0 L109.0 190.6 L108.0 190.6 L108.0 199.4 L107.0 199.4 L107.0 192.1 L106.0 192.1 L106.0 210.5 L105.0 210.5 L105.0 204.5 L104.0 204.5 L104.0 195.3 L103.0 195.3 L103.0 204.7 L102.0 204.7 L102.0 191.4 L101.0 191.4 L101.0 204.8 L100.0 204.8 L100.0 190.3 L99.0 190.3 L99.0 193.2 L98.0 193.2 L98.0 196.0 L97.0 196.0 L97.0 196.7 L96.0 196.7 L96.0 200.1 L95.0 200.1 L95.0 192.8 L94.0 192.8 L94.0 190.8 L93.0 190.8 L93.0 199.3 L92.0 199.3 L92.0 190.6 L91.0 190.6 L91.0 191.4 L90.0 191.4 L90.0 196.4 L89.0 196.4 L89.0 189.6 L88.0 189.6 L88.0 196.7 L87.0 196.7 L87.0 190.0 L86.0 190.0 L86.0 196.5 L85.0 196.5 L85.0 194.9 L84.0 194.9 L84.0 199.8 L83.0 199.8 L83.0 204.8 L82.0 204.8 L82.0 207.5 L81.0 207.5 L81.0 198.3 L80.0 198.3 L80.0 208.3 L79.0 208.3 L79.0 190.5 L78.0 190.5 L78.0 206.9 L77.0 206.9 L77.0 204.6 L76.0 204.6 L76.0 200.0 L75.0 200.0 L75.0 207.7 L74.0 207.7 L74.0 198.3 L73.0 198.3 L73.0 196.7 L72.0 196.7 L72.0 198.4 L71.0 198.4 L71.0 194.8 L70.0 194.8 L70.0 206.6 L69.0 206.6 L69.0 205.6 L68.0 205.6 L68.0 206.3 L67.0 206.3 L67.0 201.4 L66.0 201.4 L66.0 201.0 L65.0 201.0 L65.0 211.4 L64.0 211.4 L64.0 208.2 L63.0 208.2 L63.0 196.5 L62.0 196.5 L62.0 195.5 L61.0 195.5 L61.0 212.2 L60.0 212.2 L60.0 225.0 L59.0 225.0 L59.0 228.3 L58.0 228.3 L58.0 214.8 L57.0 214.8 L57.0 213.3 L56.0 213.3 L56.0 218.5 L55.0 218.5 L55.0 220.6 L54.0 220.6 L54.0 198.4 L53.0 198.4 L53.0 230.8 L52.0 230.8 L52.0 226.4 L51.0 226.4 L51.0 205.1 L50.0 205.1 L50.0 225.1 L49.0 225.1 L49.0 236.5 L48.0 236.5 L48.0 237.4 L47.0 237.4 L47.0 220.9 L46.0 220.9 L46.0 216.6 L45.0 216.6 L45.0 219.6 L44.0 219.6 L44.0 217.9 L43.0 217.9 L43.0 215.7 L42.0 215.7 L42.0 225.7 L41.0 225.7 L41.0 216.6 L40.0 216.6 L40.0 223.4 L39.0 223.4 L39.0 228.2 L38.0 228.2 L38.0 221.0 L37.0 221.0 L37.0 259.4 L36.0 259.4 L36.0 236.7 L35.0 236.7 L35.0 245.8 L34.0 245.8 L34.0 248.4 L33.0 248.4 L33.0 249.0 L32.0 249.0 L32.0 245.5 L31.0 245.5 L31.0 261.2 L30.0 261.2 L30.0 239.8 L29.0 239.8 L29.0 244.9 L28.0 244.9 L28.0 240.2 L27.0 240.2 L27.0 235.7 L26.0 235.7 L26.0 247.6 L25.0 247.6 L25.0 223.2 L24.0 223.2 L24.0 219.4 L23.0 219.4 L23.0 245.0 L22.0 245.0 L22.0 225.6 L21.0 225.6 L21.0 218.4 L20.0 218.4 L20.0 220.9 L19.0 220.9 L19.0 244.2 L18.0 244.2 L18.0 232.9 L17.0 232.9 L17.0 233.7 L16.0 233.7 L16.0 223.6 L15.0 223.6 L15.0 246.9 L14.0 246.9 L14.0 237.8 L13.0 237.8 L13.0 230.6 L12.0 230.6 L12.0 229.3 L11.0 229.3 L11.0 253.0 L10.0 253.0 L10.0 253.7 L9.0 253.7 L9.0 239.6 L8.0 239.6 L8.0 249.2 L7.0 249.2 L7.0 241.3 L6.0 241.3 L6.0 244.8 L5.0 244.8 L5.0 256.3 L4.0 256.3 L4.0 224.9 L3.0 224.9 L3.0 234.2 L2.0 234.2Z" fill="#403f44"/>
<path d="M2.0 457.7 L3.0 457.7 L3.0 457.7 L4.0 457.7 L4.0 457.7 L5.0 457.7 L5.0 457.7 L6.0 457.7 L6.0 457.7 L7.0 457.7 L7.0 457.7 L8.0 457.7 L8.0 457.7 L9.0 457.7 L9.0 457.7 L10.0 457.7 L10.0 457.7 L11.0 457.7 L11.0 457.7 L12.0 457.7 L12.0 457.7 L13.0 457.7 L13.0 457.7 L14.0 457.7 L14.0 457.7 L15.0 457.7 L15.0 457.7 L16.0 457.7 L16.0 457.7 L17.0 457.7 L17.0 457.5 L18.0 457.5 L18.0 457.5 L19.0 457.5 L19.0 456.7 L20.0 456.7 L20.0 455.8 L21.0 455.8 L21.0 455.8 L22.0 455.8 L22.0 455.5 L23.0 455.5 L23.0 452.1 L24.0 452.1 L24.0 451.2 L25.0 451.2 L25.0 453.1 L26.0 453.1 L26.0 451.6 L27.0 451.6 L27.0 448.5 L28.0 448.5 L28.0 446.6 L29.0 446.6 L29.0 449.9 L30.0 449.9 L30.0 439.8 L31.0 439.8 L31.0 447.0 L32.0 447.0 L32.0 442.9 L33.0 442.9 L33.0 428.5 L34.0 428.5 L34.0 436.3 L35.0 436.3 L35.0 436.7 L36.0 436.7 L36.0 432.3 L37.0 432.3 L37.0 423.4 L38.0 423.4 L38.0 421.6 L39.0 421.6 L39.0 431.3 L40.0 431.3 L40.0 418.3 L41.0 418.3 L41.0 421.1 L42.0 421.1 L42.0 432.3 L43.0 432.3 L43.0 419.9 L44.0 419.9 L44.0 416.6 L45.0 416.6 L45.0 411.9 L46.0 411.9 L46.0 422.8 L47.0 422.8 L47.0 408.7 L48.0 408.7 L48.0 415.1 L49.0 415.1 L49.0 416.7 L50.0 416.7 L50.0 417.0 L51.0 417.0 L51.0 423.6 L52.0 423.6 L52.0 417.3 L53.0 417.3 L53.0 435.3 L54.0 435.3 L54.0 413.0 L55.0 413.0 L55.0 417.8 L56.0 417.8 L56.0 427.8 L57.0 427.8 L57.0 401.3 L58.0 401.3 L58.0 425.0 L59.0 425.0 L59.0 421.8 L60.0 421.8 L60.0 430.8 L61.0 430.8 L61.0 400.8 L62.0 400.8 L62.0 434.6 L63.0 434.6 L63.0 430.6 L64.0 430.6 L64.0 420.8 L65.0 420.8 L65.0 422.8 L66.0 422.8 L66.0 427.3 L67.0 427.3 L67.0 425.7 L68.0 425.7 L68.0 420.9 L69.0 420.9 L69.0 427.6 L70.0 427.6 L70.0 428.7 L71.0 428.7 L71.0 429.3 L72.0 429.3 L72.0 418.9 L73.0 418.9 L73.0 414.8 L74.0 414.8 L74.0 422.0 L75.0 422.0 L75.0 424.3 L76.0 424.3 L76.0 436.7 L77.0 436.7 L77.0 409.9 L78.0 409.9 L78.0 424.6 L79.0 424.6 L79.0 422.2 L80.0 422.2 L80.0 408.5 L81.0 408.5 L81.0 434.0 L82.0 434.0 L82.0 426.3 L83.0 426.3 L83.0 418.7 L84.0 418.7 L84.0 429.2 L85.0 429.2 L85.0 422.0 L86.0 422.0 L86.0 425.8 L87.0 425.8 L87.0 392.7 L88.0 392.7 L88.0 394.0 L89.0 394.0 L89.0 411.0 L90.0 411.0 L90.0 404.0 L91.0 404.0 L91.0 418.7 L92.0 418.7 L92.0 381.2 L93.0 381.2 L93.0 379.0 L94.0 379.0 L94.0 339.2 L95.0 339.2 L95.0 399.4 L96.0 399.4 L96.0 370.2 L97.0 370.2 L97.0 392.8 L98.0 392.8 L98.0 394.4 L99.0 394.4 L99.0 358.8 L100.0 358.8 L100.0 404.1 L101.0 404.1 L101.0 345.5 L102.0 345.5 L102.0 407.3 L103.0 407.3 L103.0 337.4 L104.0 337.4 L104.0 334.0 L105.0 334.0 L105.0 360.8 L106.0 360.8 L106.0 361.2 L107.0 361.2 L107.0 342.6 L108.0 342.6 L108.0 340.2 L109.0 340.2 L109.0 348.9 L110.0 348.9 L110.0 403.1 L111.0 403.1 L111.0 405.2 L112.0 405.2 L112.0 373.9 L113.0 373.9 L113.0 394.9 L114.0 394.9 L114.0 395.8 L115.0 395.8 L115.0 386.6 L116.0 386.6 L116.0 381.5 L117.0 381.5 L117.0 375.1 L118.0 375.1 L118.0 390.3 L119.0 390.3 L119.0 375.1 L120.0 375.1 L120.0 351.3 L121.0 351.3 L121.0 402.2 L122.0 402.2 L122.0 408.2 L123.0 408.2 L123.0 402.4 L124.0 402.4 L124.0 389.4 L125.0 389.4 L125.0 385.1 L126.0 385.1 L126.0 429.1 L127.0 429.1 L127.0 432.2 L128.0 432.2 L128.0 433.3 L129.0 433.3 L129.0 402.1 L130.0 402.1 L130.0 425.2 L131.0 425.2 L131.0 435.2 L132.0 435.2 L132.0 414.1 L133.0 414.1 L133.0 426.9 L134.0 426.9 L134.0 421.7 L135.0 421.7 L135.0 420.8 L136.0 420.8 L136.0 439.9 L137.0 439.9 L137.0 439.4 L138.0 439.4 L138.0 433.0 L139.0 433.0 L139.0 427.2 L140.0 427.2 L140.0 435.8 L141.0 435.8 L141.0 426.2 L142.0 426.2 L142.0 425.3 L143.0 425.3 L143.0 427.3 L144.0 427.3 L144.0 436.4 L145.0 436.4 L145.0 440.6 L146.0 440.6 L146.0 435.5 L147.0 435.5 L147.0 441.1 L148.0 441.1 L148.0 420.1 L149.0 420.1 L149.0 431.3 L150.0 431.3 L150.0 420.3 L151.0 420.3 L151.0 437.9 L152.0 437.9 L152.0 422.8 L153.0 422.8 L153.0 431.8 L154.0 431.8 L154.0 420.2 L155.0 420.2 L155.0 440.6 L156.0 440.6 L156.0 404.7 L157.0 404.7 L157.0 434.4 L158.0 434.4 L158.0 430.5 L159.0 430.5 L159.0 435.5 L160.0 435.5 L160.0 423.7 L161.0 423.7 L161.0 422.7 L162.0 422.7 L162.0 439.6 L163.0 439.6 L163.0 420.7 L164.0 420.7 L164.0 424.4 L165.0 424.4 L165.0 424.4 L166.0 424.4 L166.0 438.8 L167.0 438.8 L167.0 419.3 L168.0 419.3 L168.0 411.7 L169.0 411.7 L169.0 415.2 L170.0 415.2 L170.0 423.6 L171.0 423.6 L171.0 427.2 L172.0 427.2 L172.0 427.4 L173.0 427.4 L173.0 433.6 L174.0 433.6 L174.0 403.5 L175.0 403.5 L175.0 412.8 L176.0 412.8 L176.0 427.1 L177.0 427.1 L177.0 434.8 L178.0 434.8 L178.0 404.4 L179.0 404.4 L179.0 432.4 L180.0 432.4 L180.0 424.0 L181.0 424.0 L181.0 427.5 L182.0 427.5 L182.0 414.8 L183.0 414.8 L183.0 416.9 L184.0 416.9 L184.0 421.7 L185.0 421.7 L185.0 425.3 L186.0 425.3 L186.0 419.3 L187.0 419.3 L187.0 428.5 L188.0 428.5 L188.0 409.4 L189.0 409.4 L189.0 406.7 L190.0 406.7 L190.0 416.4 L191.0 416.4 L191.0 413.0 L192.0 413.0 L192.0 436.0 L193.0 436.0 L193.0 439.1 L194.0 439.1 L194.0 425.0 L195.0 425.0 L195.0 430.2 L196.0 430.2 L196.0 442.9 L197.0 442.9 L197.0 431.0 L198.0 431.0 L198.0 434.9 L199.0 434.9 L199.0 439.1 L200.0 439.1 L200.0 429.0 L201.0 429.0 L201.0 442.0 L202.0 442.0 L202.0 434.9 L203.0 434.9 L203.0 439.8 L204.0 439.8 L204.0 443.6 L205.0 443.6 L205.0 447.4 L206.0 447.4 L206.0 447.4 L207.0 447.4 L207.0 434.1 L208.0 434.1 L208.0 447.6 L209.0 447.6 L209.0 438.9 L210.0 438.9 L210.0 442.3 L211.0 442.3 L211.0 443.6 L212.0 443.6 L212.0 436.7 L213.0 436.7 L213.0 444.9 L214.0 444.9 L214.0 438.6 L215.0 438.6 L215.0 441.0 L216.0 441.0 L216.0 364.0 L217.0 364.0 L217.0 363.4 L218.0 363.4 L218.0 356.1 L219.0 356.1 L219.0 401.0 L220.0 401.0 L220.0 409.2 L221.0 409.2 L221.0 393.1 L222.0 393.1 L222.0 414.4 L223.0 414.4 L223.0 408.7 L224.0 408.7 L224.0 415.1 L225.0 415.1 L225.0 372.2 L226.0 372.2 L226.0 388.6 L227.0 388.6 L227.0 413.3 L228.0 413.3 L228.0 393.1 L229.0 393.1 L229.0 388.5 L230.0 388.5 L230.0 413.7 L231.0 413.7 L231.0 398.2 L232.0 398.2 L232.0 417.8 L233.0 417.8 L233.0 378.6 L234.0 378.6 L234.0 367.2 L235.0 367.2 L235.0 365.7 L236.0 365.7 L236.0 411.1 L237.0 411.1 L237.0 376.6 L238.0 376.6 L238.0 402.5 L239.0 402.5 L239.0 398.9 L240.0 398.9 L240.0 392.1 L241.0 392.1 L241.0 410.2 L242.0 410.2 L242.0 370.5 L243.0 370.5 L243.0 380.9 L244.0 380.9 L244.0 403.6 L245.0 403.6 L245.0 409.0 L246.0 409.0 L246.0 374.7 L247.0 374.7 L247.0 329.9 L248.0 329.9 L248.0 386.1 L249.0 386.1 L249.0 415.4 L250.0 415.4 L250.0 418.4 L251.0 418.4 L251.0 384.8 L252.0 384.8 L252.0 418.2 L253.0 418.2 L253.0 424.2 L254.0 424.2 L254.0 403.6 L255.0 403.6 L255.0 379.7 L256.0 379.7 L256.0 423.1 L257.0 423.1 L257.0 419.4 L258.0 419.4 L258.0 406.8 L259.0 406.8 L259.0 415.2 L260.0 415.2 L260.0 401.1 L261.0 401.1 L261.0 386.3 L262.0 386.3 L262.0 409.9 L263.0 409.9 L263.0 395.0 L264.0 395.0 L264.0 409.8 L265.0 409.8 L265.0 396.8 L266.0 396.8 L266.0 393.5 L267.0 393.5 L267.0 409.2 L268.0 409.2 L268.0 405.1 L269.0 405.1 L269.0 417.2 L270.0 417.2 L270.0 402.3 L271.0 402.3 L271.0 425.5 L272.0 425.5 L272.0 405.2 L273.0 405.2 L273.0 424.8 L274.0 424.8 L274.0 426.8 L275.0 426.8 L275.0 420.9 L276.0 420.9 L276.0 424.9 L277.0 424.9 L277.0 410.3 L278.0 410.3 L278.0 416.4 L279.0 416.4 L279.0 420.5 L280.0 420.5 L280.0 421.0 L281.0 421.0 L281.0 423.1 L282.0 423.1 L282.0 432.2 L283.0 432.2 L283.0 407.9 L284.0 407.9 L284.0 426.3 L285.0 426.3 L285.0 419.4 L286.0 419.4 L286.0 430.1 L287.0 430.1 L287.0 418.8 L288.0 418.8 L288.0 427.4 L289.0 427.4 L289.0 432.2 L290.0 432.2 L290.0 430.6 L291.0 430.6 L291.0 422.1 L292.0 422.1 L292.0 434.6 L293.0 434.6 L293.0 422.1 L294.0 422.1 L294.0 431.6 L295.0 431.6 L295.0 440.3 L296.0 440.3 L296.0 427.9 L297.0 427.9 L297.0 435.6 L298.0 435.6 L298.0 429.2 L299.0 429.2 L299.0 439.7 L300.0 439.7 L300.0 446.7 L301.0 446.7 L301.0 440.1 L302.0 440.1 L302.0 443.3 L303.0 443.3 L303.0 439.9 L304.0 439.9 L304.0 448.1 L305.0 448.1 L305.0 449.3 L306.0 449.3 L306.0 446.0 L307.0 446.0 L307.0 443.7 L308.0 443.7 L308.0 445.2 L309.0 445.2 L309.0 443.2 L310.0 443.2 L310.0 451.8 L311.0 451.8 L311.0 452.7 L312.0 452.7 L312.0 450.3 L313.0 450.3 L313.0 448.3 L314.0 448.3 L314.0 447.1 L315.0 447.1 L315.0 448.2 L316.0 448.2 L316.0 448.4 L317.0 448.4 L317.0 450.7 L318.0 450.7 L318.0 453.8 L319.0 453.8 L319.0 451.3 L320.0 451.3 L320.0 397.3 L321.0 397.3 L321.0 408.8 L322.0 408.8 L322.0 390.0 L323.0 390.0 L323.0 351.3 L324.0 351.3 L324.0 409.3 L325.0 409.3 L325.0 373.8 L326.0 373.8 L326.0 383.5 L327.0 383.5 L327.0 402.9 L328.0 402.9 L328.0 399.7 L329.0 399.7 L329.0 379.7 L330.0 379.7 L330.0 408.9 L331.0 408.9 L331.0 358.2 L332.0 358.2 L332.0 407.5 L333.0 407.5 L333.0 353.8 L334.0 353.8 L334.0 384.7 L335.0 384.7 L335.0 385.3 L336.0 385.3 L336.0 395.1 L337.0 395.1 L337.0 393.9 L338.0 393.9 L338.0 406.1 L339.0 406.1 L339.0 379.1 L340.0 379.1 L340.0 360.2 L341.0 360.2 L341.0 393.2 L342.0 393.2 L342.0 371.1 L343.0 371.1 L343.0 364.3 L344.0 364.3 L344.0 376.3 L345.0 376.3 L345.0 336.0 L346.0 336.0 L346.0 360.4 L347.0 360.4 L347.0 402.8 L348.0 402.8 L348.0 401.5 L349.0 401.5 L349.0 314.4 L350.0 314.4 L350.0 355.6 L351.0 355.6 L351.0 363.4 L352.0 363.4 L352.0 387.9 L353.0 387.9 L353.0 385.9 L354.0 385.9 L354.0 386.2 L355.0 386.2 L355.0 362.3 L356.0 362.3 L356.0 403.5 L357.0 403.5 L357.0 399.5 L358.0 399.5 L358.0 387.7 L359.0 387.7 L359.0 375.1 L360.0 375.1 L360.0 386.1 L361.0 386.1 L361.0 396.9 L362.0 396.9 L362.0 414.0 L363.0 414.0 L363.0 413.9 L364.0 413.9 L364.0 403.6 L365.0 403.6 L365.0 405.0 L366.0 405.0 L366.0 413.7 L367.0 413.7 L367.0 363.3 L368.0 363.3 L368.0 411.4 L369.0 411.4 L369.0 382.5 L370.0 382.5 L370.0 378.5 L371.0 378.5 L371.0 379.2 L372.0 379.2 L372.0 396.6 L373.0 396.6 L373.0 424.2 L374.0 424.2 L374.0 407.2 L375.0 407.2 L375.0 415.8 L376.0 415.8 L376.0 393.1 L377.0 393.1 L377.0 430.1 L378.0 430.1 L378.0 423.2 L379.0 423.2 L379.0 422.4 L380.0 422.4 L380.0 429.3 L381.0 429.3 L381.0 417.1 L382.0 417.1 L382.0 432.3 L383.0 432.3 L383.0 432.4 L384.0 432.4 L384.0 418.9 L385.0 418.9 L385.0 416.7 L386.0 416.7 L386.0 421.2 L387.0 421.2 L387.0 421.7 L388.0 421.7 L388.0 383.6 L389.0 383.6 L389.0 430.2 L390.0 430.2 L390.0 423.1 L391.0 423.1 L391.0 424.9 L392.0 424.9 L392.0 416.8 L393.0 416.8 L393.0 406.5 L394.0 406.5 L394.0 395.7 L395.0 395.7 L395.0 407.1 L396.0 407.1 L396.0 408.4 L397.0 408.4 L397.0 404.2 L398.0 404.2 L398.0 407.9 L399.0 407.9 L399.0 423.5 L400.0 423.5 L400.0 401.7 L401.0 401.7 L401.0 410.3 L402.0 410.3 L402.0 394.1 L403.0 394.1 L403.0 412.2 L404.0 412.2 L404.0 414.9 L405.0 414.9 L405.0 402.7 L406.0 402.7 L406.0 399.0 L407.0 399.0 L407.0 405.6 L408.0 405.6 L408.0 402.4 L409.0 402.4 L409.0 417.2 L410.0 417.2 L410.0 399.6 L411.0 399.6 L411.0 428.4 L412.0 428.4 L412.0 405.6 L413.0 405.6 L413.0 402.1 L414.0 402.1 L414.0 412.3 L415.0 412.3 L415.0 406.2 L416.0 406.2 L416.0 423.8 L417.0 423.8 L417.0 414.6 L418.0 414.6 L418.0 429.6 L419.0 429.6 L419.0 399.2 L420.0 399.2 L420.0 397.7 L421.0 397.7 L421.0 393.1 L422.0 393.1 L422.0 431.7 L423.0 431.7 L423.0 396.1 L424.0 396.1 L424.0 421.1 L425.0 421.1 L425.0 415.4 L426.0 415.4 L426.0 421.4 L427.0 421.4 L427.0 429.2 L428.0 429.2 L428.0 414.1 L429.0 414.1 L429.0 420.8 L430.0 420.8 L430.0 393.3 L431.0 393.3 L431.0 424.1 L432.0 424.1 L432.0 418.6 L433.0 418.6 L433.0 415.8 L434.0 415.8 L434.0 404.9 L435.0 404.9 L435.0 422.0 L436.0 422.0 L436.0 428.6 L437.0 428.6 L437.0 421.4 L438.0 421.4 L438.0 408.9 L439.0 408.9 L439.0 419.3 L440.0 419.3 L440.0 424.3 L441.0 424.3 L441.0 408.6 L442.0 408.6 L442.0 400.2 L443.0 400.2 L443.0 421.2 L444.0 421.2 L444.0 419.2 L445.0 419.2 L445.0 409.1 L446.0 409.1 L446.0 428.0 L447.0 428.0 L447.0 406.3 L448.0 406.3 L448.0 423.2 L449.0 423.2 L449.0 389.5 L450.0 389.5 L450.0 396.7 L451.0 396.7 L451.0 389.6 L452.0 389.6 L452.0 402.9 L453.0 402.9 L453.0 404.5 L454.0 404.5 L454.0 410.7 L455.0 410.7 L455.0 390.4 L456.0 390.4 L456.0 400.9 L457.0 400.9 L457.0 429.7 L458.0 429.7 L458.0 399.6 L459.0 399.6 L459.0 403.9 L460.0 403.9 L460.0 390.3 L461.0 390.3 L461.0 420.5 L462.0 420.5 L462.0 426.2 L463.0 426.2 L463.0 401.2 L464.0 401.2 L464.0 389.9 L465.0 389.9 L465.0 403.7 L466.0 403.7 L466.0 405.7 L467.0 405.7 L467.0 391.4 L468.0 391.4 L468.0 407.9 L469.0 407.9 L469.0 422.3 L470.0 422.3 L470.0 401.3 L471.0 401.3 L471.0 420.0 L472.0 420.0 L472.0 384.3 L473.0 384.3 L473.0 418.4 L474.0 418.4 L474.0 388.3 L475.0 388.3 L475.0 382.2 L476.0 382.2 L476.0 385.1 L477.0 385.1 L477.0 412.0 L478.0 412.0 L478.0 392.1 L479.0 392.1 L479.0 403.1 L480.0 403.1 L480.0 421.8 L481.0 421.8 L481.0 391.5 L482.0 391.5 L482.0 408.7 L483.0 408.7 L483.0 352.0 L484.0 352.0 L484.0 418.2 L485.0 418.2 L485.0 412.9 L486.0 412.9 L486.0 413.2 L487.0 413.2 L487.0 425.2 L488.0 425.2 L488.0 385.1 L489.0 385.1 L489.0 418.6 L490.0 418.6 L490.0 387.5 L491.0 387.5 L491.0 395.7 L492.0 395.7 L492.0 400.9 L493.0 400.9 L493.0 419.1 L494.0 419.1 L494.0 416.0 L495.0 416.0 L495.0 394.9 L496.0 394.9 L496.0 387.8 L497.0 387.8 L497.0 384.9 L498.0 384.9 L498.0 340.5 L499.0 340.5 L499.0 389.6 L500.0 389.6 L500.0 388.5 L501.0 388.5 L501.0 375.6 L502.0 375.6 L502.0 373.0 L503.0 373.0 L503.0 405.5 L504.0 405.5 L504.0 394.8 L505.0 394.8 L505.0 404.0 L506.0 404.0 L506.0 412.8 L507.0 412.8 L507.0 375.8 L508.0 375.8 L508.0 392.0 L509.0 392.0 L509.0 414.9 L510.0 414.9 L510.0 402.1 L511.0 402.1 L511.0 421.6 L512.0 421.6 L512.0 415.5 L513.0 415.5 L513.0 381.0 L514.0 381.0 L514.0 404.9 L515.0 404.9 L515.0 414.7 L516.0 414.7 L516.0 391.5 L517.0 391.5 L517.0 405.5 L518.0 405.5 L518.0 379.0 L519.0 379.0 L519.0 393.5 L520.0 393.5 L520.0 398.0 L521.0 398.0 L521.0 407.0 L522.0 407.0 L522.0 365.6 L523.0 365.6 L523.0 417.4 L524.0 417.4 L524.0 407.1 L525.0 407.1 L525.0 412.7 L526.0 412.7 L526.0 384.8 L527.0 384.8 L527.0 368.5 L528.0 368.5 L528.0 396.6 L529.0 396.6 L529.0 396.1 L530.0 396.1 L530.0 409.4 L531.0 409.4 L531.0 407.9 L532.0 407.9 L532.0 369.5 L533.0 369.5 L533.0 395.5 L534.0 395.5 L534.0 388.3 L535.0 388.3 L535.0 404.4 L536.0 404.4 L536.0 397.2 L537.0 397.2 L537.0 382.2 L538.0 382.2 L538.0 394.3 L539.0 394.3 L539.0 406.5 L540.0 406.5 L540.0 400.2 L541.0 400.2 L541.0 414.7 L542.0 414.7 L542.0 414.0 L543.0 414.0 L543.0 417.7 L544.0 417.7 L544.0 388.9 L545.0 388.9 L545.0 374.9 L546.0 374.9 L546.0 373.0 L547.0 373.0 L547.0 418.1 L548.0 418.1 L548.0 419.7 L549.0 419.7 L549.0 420.4 L550.0 420.4 L550.0 385.8 L551.0 385.8 L551.0 397.5 L552.0 397.5 L552.0 385.6 L553.0 385.6 L553.0 387.3 L554.0 387.3 L554.0 383.1 L555.0 383.1 L555.0 398.9 L556.0 398.9 L556.0 400.8 L557.0 400.8 L557.0 390.8 L558.0 390.8 L558.0 377.2 L559.0 377.2 L559.0 403.6 L560.0 403.6 L560.0 382.7 L561.0 382.7 L561.0 418.9 L562.0 418.9 L562.0 385.1 L563.0 385.1 L563.0 413.6 L564.0 413.6 L564.0 404.4 L565.0 404.4 L565.0 397.5 L566.0 397.5 L566.0 412.0 L567.0 412.0 L567.0 415.3 L568.0 415.3 L568.0 386.9 L569.0 386.9 L569.0 385.5 L570.0 385.5 L570.0 403.8 L571.0 403.8 L571.0 420.8 L572.0 420.8 L572.0 379.6 L573.0 379.6 L573.0 386.6 L574.0 386.6 L574.0 389.1 L575.0 389.1 L575.0 406.9 L576.0 406.9 L576.0 421.3 L577.0 421.3 L577.0 376.3 L578.0 376.3 L578.0 384.2 L579.0 384.2 L579.0 405.0 L580.0 405.0 L580.0 385.2 L581.0 385.2 L581.0 398.6 L582.0 398.6 L582.0 382.7 L583.0 382.7 L583.0 384.7 L584.0 384.7 L584.0 412.8 L585.0 412.8 L585.0 381.7 L586.0 381.7 L586.0 419.4 L587.0 419.4 L587.0 403.7 L588.0 403.7 L588.0 386.9 L589.0 386.9 L589.0 405.5 L590.0 405.5 L590.0 405.7 L591.0 405.7 L591.0 418.6 L592.0 418.6 L592.0 390.5 L593.0 390.5 L593.0 407.0 L594.0 407.0 L594.0 396.5 L595.0 396.5 L595.0 425.0 L596.0 425.0 L596.0 397.4 L597.0 397.4 L597.0 410.0 L598.0 410.0 L598.0 425.0 L599.0 425.0 L599.0 413.2 L600.0 413.2 L600.0 438.7 L601.0 438.7 L601.0 437.1 L602.0 437.1 L602.0 419.5 L603.0 419.5 L603.0 428.7 L604.0 428.7 L604.0 416.4 L605.0 416.4 L605.0 432.7 L606.0 432.7 L606.0 438.7 L607.0 438.7 L607.0 433.3 L608.0 433.3 L608.0 432.7 L609.0 432.7 L609.0 431.1 L610.0 431.1 L610.0 415.3 L611.0 415.3 L611.0 433.2 L612.0 433.2 L612.0 441.9 L613.0 441.9 L613.0 427.9 L614.0 427.9 L614.0 423.2 L615.0 423.2 L615.0 425.9 L616.0 425.9 L616.0 432.1 L617.0 432.1 L617.0 435.6 L618.0 435.6 L618.0 435.4 L619.0 435.4 L619.0 432.3 L620.0 432.3 L620.0 427.0 L621.0 427.0 L621.0 438.5 L622.0 438.5 L622.0 437.8 L623.0 437.8 L623.0 437.3 L624.0 437.3 L624.0 441.7 L625.0 441.7 L625.0 436.5 L626.0 436.5 L626.0 429.2 L627.0 429.2 L627.0 442.6 L628.0 442.6 L628.0 442.7 L629.0 442.7 L629.0 433.8 L630.0 433.8 L630.0 435.4 L631.0 435.4 L631.0 429.8 L632.0 429.8 L632.0 424.1 L633.0 424.1 L633.0 430.7 L634.0 430.7 L634.0 433.4 L635.0 433.4 L635.0 438.8 L636.0 438.8 L636.0 439.3 L637.0 439.3 L637.0 442.2 L638.0 442.2 L638.0 442.0 L639.0 442.0 L639.0 452.5 L640.0 452.5 L640.0 452.2 L641.0 452.2 L641.0 452.6 L642.0 452.6 L642.0 454.0 L643.0 454.0 L643.0 452.6 L644.0 452.6 L644.0 453.2 L645.0 453.2 L645.0 454.1 L646.0 454.1 L646.0 454.7 L647.0 454.7 L647.0 455.7 L648.0 455.7 L648.0 455.1 L649.0 455.1 L649.0 457.1 L650.0 457.1 L650.0 455.4 L651.0 455.4 L651.0 457.3 L652.0 457.3 L652.0 457.0 L653.0 457.0 L653.0 456.9 L654.0 456.9 L654.0 457.3 L655.0 457.3 L655.0 457.7 L656.0 457.7 L656.0 457.7 L657.0 457.7 L657.0 457.7 L658.0 457.7 L658.0 457.7 L659.0 457.7 L659.0 458.7 L658.0 458.7 L658.0 458.7 L657.0 458.7 L657.0 458.7 L656.0 458.7 L656.0 458.7 L655.0 458.7 L655.0 458.7 L654.0 458.7 L654.0 459.0 L653.0 459.0 L653.0 458.8 L652.0 458.8 L652.0 459.2 L651.0 459.2 L651.0 459.3 L650.0 459.3 L650.0 459.8 L649.0 459.8 L649.0 459.6 L648.0 459.6 L648.0 459.9 L647.0 459.9 L647.0 462.3 L646.0 462.3 L646.0 460.9 L645.0 460.9 L645.0 461.8 L644.0 461.8 L644.0 462.3 L643.0 462.3 L643.0 465.2 L642.0 465.2 L642.0 463.2 L641.0 463.2 L641.0 462.4 L640.0 462.4 L640.0 463.0 L639.0 463.0 L639.0 468.4 L638.0 468.4 L638.0 469.5 L637.0 469.5 L637.0 482.9 L636.0 482.9 L636.0 472.1 L635.0 472.1 L635.0 472.6 L634.0 472.6 L634.0 480.9 L633.0 480.9 L633.0 477.4 L632.0 477.4 L632.0 475.1 L631.0 475.1 L631.0 478.8 L630.0 478.8 L630.0 471.0 L629.0 471.0 L629.0 474.2 L628.0 474.2 L628.0 474.4 L627.0 474.4 L627.0 475.0 L626.0 475.0 L626.0 488.7 L625.0 488.7 L625.0 488.5 L624.0 488.5 L624.0 480.2 L623.0 480.2 L623.0 479.3 L622.0 479.3 L622.0 490.4 L621.0 490.4 L621.0 498.3 L620.0 498.3 L620.0 479.7 L619.0 479.7 L619.0 487.7 L618.0 487.7 L618.0 501.3 L617.0 501.3 L617.0 487.8 L616.0 487.8 L616.0 493.2 L615.0 493.2 L615.0 478.6 L614.0 478.6 L614.0 479.9 L613.0 479.9 L613.0 475.9 L612.0 475.9 L612.0 485.9 L611.0 485.9 L611.0 476.5 L610.0 476.5 L610.0 479.0 L609.0 479.0 L609.0 481.5 L608.0 481.5 L608.0 477.2 L607.0 477.2 L607.0 498.4 L606.0 498.4 L606.0 487.8 L605.0 487.8 L605.0 482.4 L604.0 482.4 L604.0 498.5 L603.0 498.5 L603.0 490.3 L602.0 490.3 L602.0 492.0 L601.0 492.0 L601.0 485.1 L600.0 485.1 L600.0 492.4 L599.0 492.4 L599.0 483.2 L598.0 483.2 L598.0 501.7 L597.0 501.7 L597.0 511.9 L596.0 511.9 L596.0 493.7 L595.0 493.7 L595.0 513.4 L594.0 513.4 L594.0 504.3 L593.0 504.3 L593.0 505.2 L592.0 505.2 L592.0 537.0 L591.0 537.0 L591.0 508.0 L590.0 508.0 L590.0 529.5 L589.0 529.5 L589.0 495.3 L588.0 495.3 L588.0 506.6 L587.0 506.6 L587.0 493.0 L586.0 493.0 L586.0 529.4 L585.0 529.4 L585.0 529.0 L584.0 529.0 L584.0 501.5 L583.0 501.5 L583.0 491.5 L582.0 491.5 L582.0 518.0 L581.0 518.0 L581.0 494.4 L580.0 494.4 L580.0 488.6 L579.0 488.6 L579.0 515.3 L578.0 515.3 L578.0 512.3 L577.0 512.3 L577.0 501.5 L576.0 501.5 L576.0 505.2 L575.0 505.2 L575.0 523.0 L574.0 523.0 L574.0 533.6 L573.0 533.6 L573.0 524.8 L572.0 524.8 L572.0 523.0 L571.0 523.0 L571.0 503.5 L570.0 503.5 L570.0 506.3 L569.0 506.3 L569.0 516.7 L568.0 516.7 L568.0 512.7 L567.0 512.7 L567.0 516.7 L566.0 516.7 L566.0 516.0 L565.0 516.0 L565.0 535.8 L564.0 535.8 L564.0 526.6 L563.0 526.6 L563.0 534.0 L562.0 534.0 L562.0 527.7 L561.0 527.7 L561.0 540.2 L560.0 540.2 L560.0 542.7 L559.0 542.7 L559.0 527.6 L558.0 527.6 L558.0 511.0 L557.0 511.0 L557.0 535.4 L556.0 535.4 L556.0 515.9 L555.0 515.9 L555.0 529.4 L554.0 529.4 L554.0 514.8 L553.0 514.8 L553.0 498.8 L552.0 498.8 L552.0 498.7 L551.0 498.7 L551.0 523.9 L550.0 523.9 L550.0 544.3 L549.0 544.3 L549.0 541.3 L548.0 541.3 L548.0 529.7 L547.0 529.7 L547.0 541.3 L546.0 541.3 L546.0 531.2 L545.0 531.2 L545.0 503.6 L544.0 503.6 L544.0 496.3 L543.0 496.3 L543.0 517.9 L542.0 517.9 L542.0 501.5 L541.0 501.5 L541.0 530.0 L540.0 530.0 L540.0 541.8 L539.0 541.8 L539.0 508.4 L538.0 508.4 L538.0 509.3 L537.0 509.3 L537.0 501.8 L536.0 501.8 L536.0 519.1 L535.0 519.1 L535.0 536.1 L534.0 536.1 L534.0 508.4 L533.0 508.4 L533.0 501.9 L532.0 501.9 L532.0 509.5 L531.0 509.5 L531.0 524.6 L530.0 524.6 L530.0 516.1 L529.0 516.1 L529.0 504.5 L528.0 504.5 L528.0 520.2 L527.0 520.2 L527.0 525.3 L526.0 525.3 L526.0 496.0 L525.0 496.0 L525.0 499.0 L524.0 499.0 L524.0 527.5 L523.0 527.5 L523.0 535.2 L522.0 535.2 L522.0 512.9 L521.0 512.9 L521.0 517.4 L520.0 517.4 L520.0 531.4 L519.0 531.4 L519.0 527.3 L518.0 527.3 L518.0 552.0 L517.0 552.0 L517.0 495.1 L516.0 495.1 L516.0 512.3 L515.0 512.3 L515.0 518.0 L514.0 518.0 L514.0 505.4 L513.0 505.4 L513.0 507.4 L512.0 507.4 L512.0 497.6 L511.0 497.6 L511.0 506.2 L510.0 506.2 L510.0 501.3 L509.0 501.3 L509.0 514.5 L508.0 514.5 L508.0 536.1 L507.0 536.1 L507.0 497.1 L506.0 497.1 L506.0 498.3 L505.0 498.3 L505.0 501.7 L504.0 501.7 L504.0 525.0 L503.0 525.0 L503.0 500.1 L502.0 500.1 L502.0 500.8 L501.0 500.8 L501.0 503.9 L500.0 503.9 L500.0 496.8 L499.0 496.8 L499.0 522.3 L498.0 522.3 L498.0 497.7 L497.0 497.7 L497.0 525.6 L496.0 525.6 L496.0 523.4 L495.0 523.4 L495.0 497.5 L494.0 497.5 L494.0 523.1 L493.0 523.1 L493.0 526.4 L492.0 526.4 L492.0 527.0 L491.0 527.0 L491.0 532.4 L490.0 532.4 L490.0 550.8 L489.0 550.8 L489.0 536.5 L488.0 536.5 L488.0 501.9 L487.0 501.9 L487.0 500.3 L486.0 500.3 L486.0 527.3 L485.0 527.3 L485.0 520.0 L484.0 520.0 L484.0 536.5 L483.0 536.5 L483.0 525.0 L482.0 525.0 L482.0 530.7 L481.0 530.7 L481.0 506.0 L480.0 506.0 L480.0 520.0 L479.0 520.0 L479.0 516.7 L478.0 516.7 L478.0 513.1 L477.0 513.1 L477.0 510.7 L476.0 510.7 L476.0 528.1 L475.0 528.1 L475.0 486.2 L474.0 486.2 L474.0 493.6 L473.0 493.6 L473.0 516.6 L472.0 516.6 L472.0 498.8 L471.0 498.8 L471.0 508.5 L470.0 508.5 L470.0 506.5 L469.0 506.5 L469.0 517.0 L468.0 517.0 L468.0 505.6 L467.0 505.6 L467.0 527.2 L466.0 527.2 L466.0 488.6 L465.0 488.6 L465.0 504.8 L464.0 504.8 L464.0 496.3 L463.0 496.3 L463.0 497.2 L462.0 497.2 L462.0 510.9 L461.0 510.9 L461.0 509.3 L460.0 509.3 L460.0 514.1 L459.0 514.1 L459.0 498.9 L458.0 498.9 L458.0 497.2 L457.0 497.2 L457.0 500.1 L456.0 500.1 L456.0 506.5 L455.0 506.5 L455.0 499.9 L454.0 499.9 L454.0 501.4 L453.0 501.4 L453.0 493.8 L452.0 493.8 L452.0 499.8 L451.0 499.8 L451.0 489.1 L450.0 489.1 L450.0 498.2 L449.0 498.2 L449.0 524.5 L448.0 524.5 L448.0 511.6 L447.0 511.6 L447.0 513.1 L446.0 513.1 L446.0 552.4 L445.0 552.4 L445.0 501.1 L444.0 501.1 L444.0 494.2 L443.0 494.2 L443.0 487.8 L442.0 487.8 L442.0 497.7 L441.0 497.7 L441.0 523.4 L440.0 523.4 L440.0 499.2 L439.0 499.2 L439.0 529.5 L438.0 529.5 L438.0 527.3 L437.0 527.3 L437.0 509.2 L436.0 509.2 L436.0 512.1 L435.0 512.1 L435.0 514.7 L434.0 514.7 L434.0 516.0 L433.0 516.0 L433.0 488.9 L432.0 488.9 L432.0 492.8 L431.0 492.8 L431.0 497.0 L430.0 497.0 L430.0 485.1 L429.0 485.1 L429.0 508.4 L428.0 508.4 L428.0 520.5 L427.0 520.5 L427.0 490.5 L426.0 490.5 L426.0 516.4 L425.0 516.4 L425.0 496.0 L424.0 496.0 L424.0 516.8 L423.0 516.8 L423.0 497.0 L422.0 497.0 L422.0 507.0 L421.0 507.0 L421.0 481.9 L420.0 481.9 L420.0 515.6 L419.0 515.6 L419.0 509.1 L418.0 509.1 L418.0 486.8 L417.0 486.8 L417.0 499.0 L416.0 499.0 L416.0 494.7 L415.0 494.7 L415.0 487.6 L414.0 487.6 L414.0 494.2 L413.0 494.2 L413.0 507.2 L412.0 507.2 L412.0 492.2 L411.0 492.2 L411.0 500.2 L410.0 500.2 L410.0 502.2 L409.0 502.2 L409.0 517.4 L408.0 517.4 L408.0 504.9 L407.0 504.9 L407.0 507.3 L406.0 507.3 L406.0 482.8 L405.0 482.8 L405.0 503.5 L404.0 503.5 L404.0 508.4 L403.0 508.4 L403.0 504.7 L402.0 504.7 L402.0 489.0 L401.0 489.0 L401.0 509.3 L400.0 509.3 L400.0 495.2 L399.0 495.2 L399.0 481.1 L398.0 481.1 L398.0 501.9 L397.0 501.9 L397.0 501.4 L396.0 501.4 L396.0 502.7 L395.0 502.7 L395.0 482.2 L394.0 482.2 L394.0 499.5 L393.0 499.5 L393.0 486.7 L392.0 486.7 L392.0 498.0 L391.0 498.0 L391.0 519.7 L390.0 519.7 L390.0 519.0 L389.0 519.0 L389.0 510.4 L388.0 510.4 L388.0 491.6 L387.0 491.6 L387.0 510.4 L386.0 510.4 L386.0 496.9 L385.0 496.9 L385.0 497.4 L384.0 497.4 L384.0 499.9 L383.0 499.9 L383.0 505.6 L382.0 505.6 L382.0 513.5 L381.0 513.5 L381.0 517.3 L380.0 517.3 L380.0 495.4 L379.0 495.4 L379.0 515.9 L378.0 515.9 L378.0 515.1 L377.0 515.1 L377.0 499.5 L376.0 499.5 L376.0 500.7 L375.0 500.7 L375.0 520.9 L374.0 520.9 L374.0 503.8 L373.0 503.8 L373.0 508.5 L372.0 508.5 L372.0 508.0 L371.0 508.0 L371.0 529.9 L370.0 529.9 L370.0 495.6 L369.0 495.6 L369.0 500.5 L368.0 500.5 L368.0 547.8 L367.0 547.8 L367.0 568.5 L366.0 568.5 L366.0 524.5 L365.0 524.5 L365.0 507.2 L364.0 507.2 L364.0 577.1 L363.0 577.1 L363.0 523.9 L362.0 523.9 L362.0 516.5 L361.0 516.5 L361.0 562.0 L360.0 562.0 L360.0 540.4 L359.0 540.4 L359.0 508.1 L358.0 508.1 L358.0 534.4 L357.0 534.4 L357.0 570.1 L356.0 570.1 L356.0 533.6 L355.0 533.6 L355.0 571.1 L354.0 571.1 L354.0 564.9 L353.0 564.9 L353.0 507.5 L352.0 507.5 L352.0 510.4 L351.0 510.4 L351.0 553.1 L350.0 553.1 L350.0 508.0 L349.0 508.0 L349.0 536.1 L348.0 536.1 L348.0 544.2 L347.0 544.2 L347.0 524.5 L346.0 524.5 L346.0 520.0 L345.0 520.0 L345.0 506.6 L344.0 506.6 L344.0 540.3 L343.0 540.3 L343.0 531.5 L342.0 531.5 L342.0 517.0 L341.0 517.0 L341.0 560.2 L340.0 560.2 L340.0 561.5 L339.0 561.5 L339.0 516.9 L338.0 516.9 L338.0 527.2 L337.0 527.2 L337.0 525.1 L336.0 525.1 L336.0 553.3 L335.0 553.3 L335.0 515.8 L334.0 515.8 L334.0 509.1 L333.0 509.1 L333.0 511.6 L332.0 511.6 L332.0 526.7 L331.0 526.7 L331.0 533.2 L330.0 533.2 L330.0 551.6 L329.0 551.6 L329.0 562.0 L328.0 562.0 L328.0 533.1 L327.0 533.1 L327.0 544.2 L326.0 544.2 L326.0 532.4 L325.0 532.4 L325.0 501.7 L324.0 501.7 L324.0 518.6 L323.0 518.6 L323.0 499.4 L322.0 499.4 L322.0 498.5 L321.0 498.5 L321.0 531.4 L320.0 531.4 L320.0 463.8 L319.0 463.8 L319.0 462.9 L318.0 462.9 L318.0 466.3 L317.0 466.3 L317.0 465.2 L316.0 465.2 L316.0 468.5 L315.0 468.5 L315.0 469.6 L314.0 469.6 L314.0 467.2 L313.0 467.2 L313.0 473.5 L312.0 473.5 L312.0 467.7 L311.0 467.7 L311.0 466.2 L310.0 466.2 L310.0 466.4 L309.0 466.4 L309.0 484.3 L308.0 484.3 L308.0 477.3 L307.0 477.3 L307.0 467.4 L306.0 467.4 L306.0 473.3 L305.0 473.3 L305.0 468.1 L304.0 468.1 L304.0 471.8 L303.0 471.8 L303.0 480.1 L302.0 480.1 L302.0 473.2 L301.0 473.2 L301.0 478.1 L300.0 478.1 L300.0 472.7 L299.0 472.7 L299.0 483.5 L298.0 483.5 L298.0 472.9 L297.0 472.9 L297.0 470.7 L296.0 470.7 L296.0 470.5 L295.0 470.5 L295.0 482.2 L294.0 482.2 L294.0 477.6 L293.0 477.6 L293.0 485.3 L292.0 485.3 L292.0 472.7 L291.0 472.7 L291.0 475.8 L290.0 475.8 L290.0 476.8 L289.0 476.8 L289.0 497.9 L288.0 497.9 L288.0 490.5 L287.0 490.5 L287.0 495.7 L286.0 495.7 L286.0 493.0 L285.0 493.0 L285.0 503.1 L284.0 503.1 L284.0 483.0 L283.0 483.0 L283.0 501.7 L282.0 501.7 L282.0 498.5 L281.0 498.5 L281.0 504.3 L280.0 504.3 L280.0 512.1 L279.0 512.1 L279.0 483.0 L278.0 483.0 L278.0 492.5 L277.0 492.5 L277.0 515.9 L276.0 515.9 L276.0 519.3 L275.0 519.3 L275.0 503.0 L274.0 503.0 L274.0 487.7 L273.0 487.7 L273.0 522.1 L272.0 522.1 L272.0 495.8 L271.0 495.8 L271.0 502.2 L270.0 502.2 L270.0 520.6 L269.0 520.6 L269.0 490.3 L268.0 490.3 L268.0 491.3 L267.0 491.3 L267.0 500.8 L266.0 500.8 L266.0 538.7 L265.0 538.7 L265.0 522.8 L264.0 522.8 L264.0 498.2 L263.0 498.2 L263.0 507.0 L262.0 507.0 L262.0 500.4 L261.0 500.4 L261.0 518.8 L260.0 518.8 L260.0 527.4 L259.0 527.4 L259.0 553.0 L258.0 553.0 L258.0 527.3 L257.0 527.3 L257.0 536.6 L256.0 536.6 L256.0 504.4 L255.0 504.4 L255.0 511.9 L254.0 511.9 L254.0 530.7 L253.0 530.7 L253.0 514.4 L252.0 514.4 L252.0 538.4 L251.0 538.4 L251.0 538.2 L250.0 538.2 L250.0 539.0 L249.0 539.0 L249.0 509.5 L248.0 509.5 L248.0 503.0 L247.0 503.0 L247.0 543.7 L246.0 543.7 L246.0 498.6 L245.0 498.6 L245.0 518.9 L244.0 518.9 L244.0 529.6 L243.0 529.6 L243.0 508.7 L242.0 508.7 L242.0 508.8 L241.0 508.8 L241.0 500.0 L240.0 500.0 L240.0 527.0 L239.0 527.0 L239.0 543.9 L238.0 543.9 L238.0 517.9 L237.0 517.9 L237.0 501.1 L236.0 501.1 L236.0 556.9 L235.0 556.9 L235.0 528.2 L234.0 528.2 L234.0 523.6 L233.0 523.6 L233.0 500.3 L232.0 500.3 L232.0 533.7 L231.0 533.7 L231.0 588.1 L230.0 588.1 L230.0 528.7 L229.0 528.7 L229.0 554.3 L228.0 554.3 L228.0 516.7 L227.0 516.7 L227.0 535.0 L226.0 535.0 L226.0 538.0 L225.0 538.0 L225.0 516.6 L224.0 516.6 L224.0 543.6 L223.0 543.6 L223.0 544.5 L222.0 544.5 L222.0 537.9 L221.0 537.9 L221.0 513.2 L220.0 513.2 L220.0 503.7 L219.0 503.7 L219.0 499.8 L218.0 499.8 L218.0 527.3 L217.0 527.3 L217.0 538.4 L216.0 538.4 L216.0 473.5 L215.0 473.5 L215.0 473.9 L214.0 473.9 L214.0 470.5 L213.0 470.5 L213.0 472.3 L212.0 472.3 L212.0 467.9 L211.0 467.9 L211.0 470.2 L210.0 470.2 L210.0 474.5 L209.0 474.5 L209.0 494.1 L208.0 494.1 L208.0 475.2 L207.0 475.2 L207.0 471.2 L206.0 471.2 L206.0 474.1 L205.0 474.1 L205.0 486.6 L204.0 486.6 L204.0 486.2 L203.0 486.2 L203.0 478.5 L202.0 478.5 L202.0 481.0 L201.0 481.0 L201.0 487.5 L200.0 487.5 L200.0 482.1 L199.0 482.1 L199.0 474.6 L198.0 474.6 L198.0 474.1 L197.0 474.1 L197.0 480.4 L196.0 480.4 L196.0 475.0 L195.0 475.0 L195.0 494.2 L194.0 494.2 L194.0 492.7 L193.0 492.7 L193.0 479.9 L192.0 479.9 L192.0 480.4 L191.0 480.4 L191.0 486.1 L190.0 486.1 L190.0 491.4 L189.0 491.4 L189.0 485.1 L188.0 485.1 L188.0 505.2 L187.0 505.2 L187.0 504.5 L186.0 504.5 L186.0 506.9 L185.0 506.9 L185.0 504.3 L184.0 504.3 L184.0 519.5 L183.0 519.5 L183.0 492.8 L182.0 492.8 L182.0 521.0 L181.0 521.0 L181.0 492.5 L180.0 492.5 L180.0 506.0 L179.0 506.0 L179.0 508.1 L178.0 508.1 L178.0 490.4 L177.0 490.4 L177.0 503.9 L176.0 503.9 L176.0 502.0 L175.0 502.0 L175.0 510.9 L174.0 510.9 L174.0 501.0 L173.0 501.0 L173.0 485.5 L172.0 485.5 L172.0 497.0 L171.0 497.0 L171.0 476.6 L170.0 476.6 L170.0 488.1 L169.0 488.1 L169.0 488.9 L168.0 488.9 L168.0 495.6 L167.0 495.6 L167.0 480.6 L166.0 480.6 L166.0 480.2 L165.0 480.2 L165.0 492.1 L164.0 492.1 L164.0 485.8 L163.0 485.8 L163.0 490.3 L162.0 490.3 L162.0 472.4 L161.0 472.4 L161.0 479.1 L160.0 479.1 L160.0 493.0 L159.0 493.0 L159.0 488.9 L158.0 488.9 L158.0 479.0 L157.0 479.0 L157.0 484.6 L156.0 484.6 L156.0 483.9 L155.0 483.9 L155.0 499.3 L154.0 499.3 L154.0 485.9 L153.0 485.9 L153.0 483.2 L152.0 483.2 L152.0 487.1 L151.0 487.1 L151.0 478.3 L150.0 478.3 L150.0 500.9 L149.0 500.9 L149.0 490.3 L148.0 490.3 L148.0 477.5 L147.0 477.5 L147.0 492.3 L146.0 492.3 L146.0 479.3 L145.0 479.3 L145.0 481.4 L144.0 481.4 L144.0 488.7 L143.0 488.7 L143.0 481.5 L142.0 481.5 L142.0 491.3 L141.0 491.3 L141.0 480.2 L140.0 480.2 L140.0 476.7 L139.0 476.7 L139.0 478.7 L138.0 478.7 L138.0 479.8 L137.0 479.8 L137.0 496.4 L136.0 496.4 L136.0 479.1 L135.0 479.1 L135.0 486.4 L134.0 486.4 L134.0 491.1 L133.0 491.1 L133.0 482.1 L132.0 482.1 L132.0 518.1 L131.0 518.1 L131.0 487.8 L130.0 487.8 L130.0 493.2 L129.0 493.2 L129.0 505.1 L128.0 505.1 L128.0 491.4 L127.0 491.4 L127.0 515.4 L126.0 515.4 L126.0 511.5 L125.0 511.5 L125.0 498.4 L124.0 498.4 L124.0 498.6 L123.0 498.6 L123.0 558.8 L122.0 558.8 L122.0 548.2 L121.0 548.2 L121.0 523.5 L120.0 523.5 L120.0 510.6 L119.0 510.6 L119.0 561.2 L118.0 561.2 L118.0 514.7 L117.0 514.7 L117.0 555.9 L116.0 555.9 L116.0 608.4 L115.0 608.4 L115.0 524.9 L114.0 524.9 L114.0 533.0 L113.0 533.0 L113.0 513.6 L112.0 513.6 L112.0 574.5 L111.0 574.5 L111.0 543.3 L110.0 543.3 L110.0 542.1 L109.0 542.1 L109.0 555.7 L108.0 555.7 L108.0 575.7 L107.0 575.7 L107.0 541.9 L106.0 541.9 L106.0 530.9 L105.0 530.9 L105.0 581.1 L104.0 581.1 L104.0 529.6 L103.0 529.6 L103.0 516.6 L102.0 516.6 L102.0 536.2 L101.0 536.2 L101.0 557.3 L100.0 557.3 L100.0 516.2 L99.0 516.2 L99.0 565.2 L98.0 565.2 L98.0 545.4 L97.0 545.4 L97.0 524.6 L96.0 524.6 L96.0 540.5 L95.0 540.5 L95.0 508.2 L94.0 508.2 L94.0 543.6 L93.0 543.6 L93.0 544.3 L92.0 544.3 L92.0 489.7 L91.0 489.7 L91.0 512.4 L90.0 512.4 L90.0 491.9 L89.0 491.9 L89.0 515.7 L88.0 515.7 L88.0 521.6 L87.0 521.6 L87.0 528.2 L86.0 528.2 L86.0 514.5 L85.0 514.5 L85.0 510.1 L84.0 510.1 L84.0 499.2 L83.0 499.2 L83.0 516.2 L82.0 516.2 L82.0 508.6 L81.0 508.6 L81.0 493.8 L80.0 493.8 L80.0 497.7 L79.0 497.7 L79.0 511.2 L78.0 511.2 L78.0 484.9 L77.0 484.9 L77.0 501.3 L76.0 501.3 L76.0 513.1 L75.0 513.1 L75.0 494.7 L74.0 494.7 L74.0 512.9 L73.0 512.9 L73.0 507.5 L72.0 507.5 L72.0 520.7 L71.0 520.7 L71.0 511.2 L70.0 511.2 L70.0 534.2 L69.0 534.2 L69.0 503.2 L68.0 503.2 L68.0 497.7 L67.0 497.7 L67.0 497.2 L66.0 497.2 L66.0 511.7 L65.0 511.7 L65.0 489.3 L64.0 489.3 L64.0 510.0 L63.0 510.0 L63.0 498.2 L62.0 498.2 L62.0 491.0 L61.0 491.0 L61.0 498.3 L60.0 498.3 L60.0 501.3 L59.0 501.3 L59.0 513.2 L58.0 513.2 L58.0 483.6 L57.0 483.6 L57.0 484.4 L56.0 484.4 L56.0 530.1 L55.0 530.1 L55.0 493.7 L54.0 493.7 L54.0 491.6 L53.0 491.6 L53.0 497.1 L52.0 497.1 L52.0 488.2 L51.0 488.2 L51.0 482.1 L50.0 482.1 L50.0 500.8 L49.0 500.8 L49.0 504.6 L48.0 504.6 L48.0 499.7 L47.0 499.7 L47.0 482.2 L46.0 482.2 L46.0 504.8 L45.0 504.8 L45.0 484.7 L44.0 484.7 L44.0 483.4 L43.0 483.4 L43.0 485.0 L42.0 485.0 L42.0 473.9 L41.0 473.9 L41.0 478.8 L40.0 478.8 L40.0 477.4 L39.0 477.4 L39.0 484.1 L38.0 484.1 L38.0 476.9 L37.0 476.9 L37.0 471.4 L36.0 471.4 L36.0 485.9 L35.0 485.9 L35.0 475.1 L34.0 475.1 L34.0 475.6 L33.0 475.6 L33.0 482.7 L32.0 482.7 L32.0 469.2 L31.0 469.2 L31.0 474.7 L30.0 474.7 L30.0 476.4 L29.0 476.4 L29.0 466.2 L28.0 466.2 L28.0 470.8 L27.0 470.8 L27.0 473.4 L26.0 473.4 L26.0 469.0 L25.0 469.0 L25.0 464.8 L24.0 464.8 L24.0 463.8 L23.0 463.8 L23.0 461.5 L22.0 461.5 L22.0 463.5 L21.0 463.5 L21.0 461.4 L20.0 461.4 L20.0 461.3 L19.0 461.3 L19.0 459.1 L18.0 459.1 L18.0 458.7 L17.0 458.7 L17.0 458.9 L16.0 458.9 L16.0 458.7 L15.0 458.7 L15.0 458.7 L14.0 458.7 L14.0 458.7 L13.0 458.7 L13.0 458.7 L12.0 458.7 L12.0 458.7 L11.0 458.7 L11.0 458.7 L10.0 458.7 L10.0 458.7 L9.0 458.7 L9.0 458.7 L8.0 458.7 L8.0 458.7 L7.0 458.7 L7.0 458.7 L6.0 458.7 L6.0 458.7 L5.0 458.7 L5.0 458.7 L4.0 458.7 L4.0 458.7 L3.0 458.7 L3.0 458.7 L2.0 458.7Z" fill="#403f44"/>
</g>
<rect x="330.9" y="32" width="0.8" height="233" fill="#403f44" opacity="0.8"/>
<rect x="53.4" y="80.0" width="0.7" height="189.0" fill="#403f44" opacity="0.75"/>
<rect x="59.0" y="71.0" width="0.7" height="209.0" fill="#403f44" opacity="0.75"/>
<rect x="65.4" y="75.0" width="0.7" height="202.0" fill="#403f44" opacity="0.75"/>
<rect x="71.0" y="97.0" width="0.7" height="143.0" fill="#403f44" opacity="0.75"/>
<rect x="110.5" y="340.0" width="0.7" height="252.0" fill="#403f44" opacity="0.75"/>
<rect x="104.0" y="350.0" width="0.7" height="235.0" fill="#403f44" opacity="0.75"/>
<rect x="248.0" y="78.0" width="0.7" height="184.0" fill="#403f44" opacity="0.75"/>
<rect x="254.0" y="80.0" width="0.7" height="178.0" fill="#403f44" opacity="0.75"/>
<rect x="476.0" y="340.0" width="0.7" height="235.0" fill="#403f44" opacity="0.75"/>
<rect x="470.0" y="346.0" width="0.7" height="214.0" fill="#403f44" opacity="0.75"/>
<rect x="500.5" y="350.0" width="0.7" height="220.0" fill="#403f44" opacity="0.75"/>
<rect x="543.7" y="75.0" width="0.7" height="187.0" fill="#403f44" opacity="0.75"/>
<rect x="609.5" y="365.0" width="0.7" height="195.0" fill="#403f44" opacity="0.75"/>
<circle cx="455.6" cy="132.8" r="76" fill="url(#gPurple)"/>
<circle cx="188.6" cy="302.5" r="67" fill="url(#gCyan)"/>
<circle cx="328.4" cy="529.2" r="34.4" fill="url(#gYellow)"/>
<path d="M2 73.5H656.5" stroke="#c4521c" stroke-width="1.5" fill="none"/>
<circle cx="87.5" cy="73.5" r="3.4" fill="#d2581a"/>
<path d="M293.0 303.0 L293.0 311.1 L292.9 319.1 L292.7 327.1 L292.4 335.0 L292.1 342.9 L291.7 350.6 L291.3 358.2 L290.7 365.6 L290.1 372.9 L289.5 380.0 L288.7 386.9 L287.9 393.5 L287.1 399.9 L286.1 406.0 L285.1 411.9 L284.1 417.4 L282.9 422.7 L281.7 427.6 L280.5 432.2 L279.1 436.4 L277.7 440.2 L276.3 443.7 L274.8 446.8 L273.2 449.5 L271.6 451.8 L269.9 453.6 L268.2 455.1 L266.4 456.2 L264.6 456.8 L262.7 457.0 L260.7 456.8 L258.8 456.2 L256.7 455.1 L254.6 453.6 L252.5 451.8 L250.3 449.5 L248.1 446.8 L245.9 443.7 L243.6 440.2 L241.2 436.4 L238.9 432.2 L236.5 427.6 L234.1 422.7 L231.6 417.4 L229.1 411.9 L226.6 406.0 L224.0 399.9 L221.5 393.5 L218.9 386.9 L216.3 380.0 L213.7 372.9 L211.0 365.6 L208.4 358.2 L205.7 350.6 L203.0 342.9 L200.3 335.0 L197.6 327.1 L194.9 319.1 L192.2 311.1 L189.5 303.0 L186.8 294.9 L184.1 286.9 L181.4 278.9 L178.7 271.0 L176.0 263.1 L173.3 255.4 L170.6 247.8 L168.0 240.4 L165.3 233.1 L162.7 226.0 L160.1 219.1 L157.5 212.5 L155.0 206.1 L152.4 200.0 L149.9 194.1 L147.4 188.6 L144.9 183.3 L142.5 178.4 L140.1 173.8 L137.8 169.6 L135.4 165.8 L133.1 162.3 L130.9 159.2 L128.7 156.5 L126.5 154.2 L124.4 152.4 L122.3 150.9 L120.2 149.8 L118.3 149.2 L116.3 149.0 L114.4 149.2 L112.6 149.8 L110.8 150.9 L109.1 152.4 L107.4 154.2 L105.8 156.5 L104.2 159.2 L102.7 162.3 L101.3 165.8 L99.9 169.6 L98.5 173.8 L97.3 178.4 L96.1 183.3 L94.9 188.6 L93.9 194.1 L92.9 200.0 L91.9 206.1 L91.1 212.5 L90.3 219.1 L89.5 226.0 L88.9 233.1 L88.3 240.4 L87.7 247.8 L87.3 255.4 L86.9 263.1 L86.6 271.0 L86.3 278.9 L86.1 286.9 L86.0 294.9 L86.0 303.0 L86.0 311.1 L86.1 319.1 L86.3 327.1 L86.6 335.0 L86.9 342.9 L87.3 350.6 L87.7 358.2 L88.3 365.6 L88.9 372.9 L89.5 380.0 L90.3 386.9 L91.1 393.5 L91.9 399.9 L92.9 406.0 L93.9 411.9 L94.9 417.4 L96.1 422.7 L97.3 427.6 L98.5 432.2 L99.9 436.4 L101.3 440.2 L102.7 443.7 L104.2 446.8 L105.8 449.5 L107.4 451.8 L109.1 453.6 L110.8 455.1 L112.6 456.2 L114.4 456.8 L116.3 457.0 L118.3 456.8 L120.2 456.2 L122.3 455.1 L124.4 453.6 L126.5 451.8 L128.7 449.5 L130.9 446.8 L133.1 443.7 L135.4 440.2 L137.7 436.4 L140.1 432.2 L142.5 427.6 L144.9 422.7 L147.4 417.4 L149.9 411.9 L152.4 406.0 L155.0 399.9 L157.5 393.5 L160.1 386.9 L162.7 380.0 L165.3 372.9 L168.0 365.6 L170.6 358.2 L173.3 350.6 L176.0 342.9 L178.7 335.0 L181.4 327.1 L184.1 319.1 L186.8 311.1 L189.5 303.0 L192.2 294.9 L194.9 286.9 L197.6 278.9 L200.3 271.0 L203.0 263.1 L205.7 255.4 L208.4 247.8 L211.0 240.4 L213.7 233.1 L216.3 226.0 L218.9 219.1 L221.5 212.5 L224.0 206.1 L226.6 200.0 L229.1 194.1 L231.6 188.6 L234.1 183.3 L236.5 178.4 L238.9 173.8 L241.2 169.6 L243.6 165.8 L245.9 162.3 L248.1 159.2 L250.3 156.5 L252.5 154.2 L254.6 152.4 L256.7 150.9 L258.8 149.8 L260.7 149.2 L262.7 149.0 L264.6 149.2 L266.4 149.8 L268.2 150.9 L269.9 152.4 L271.6 154.2 L273.2 156.5 L274.8 159.2 L276.3 162.3 L277.7 165.8 L279.1 169.6 L280.5 173.8 L281.7 178.4 L282.9 183.3 L284.1 188.6 L285.1 194.1 L286.1 200.0 L287.1 206.1 L287.9 212.5 L288.7 219.1 L289.5 226.0 L290.1 233.1 L290.7 240.4 L291.3 247.8 L291.7 255.4 L292.1 263.1 L292.4 271.0 L292.7 278.9 L292.9 286.9 L293.0 294.9 L293.0 303.0" stroke="#cc661c" stroke-width="1.25" fill="none"/>
<circle cx="170.3" cy="250" r="3.2" fill="#d85a16"/><circle cx="170.3" cy="250" r="1.6" fill="#ff8a2a"/>
<rect x="242" y="441" width="7" height="7" fill="#0a0af0"/>
<path d="M563.3 307.5 L563.1 308.8 L562.9 310.2 L562.7 311.5 L562.5 312.8 L562.4 314.2 L562.4 315.5 L562.4 316.8 L562.5 318.2 L562.7 319.5 L562.9 320.9 L563.1 322.3 L563.2 323.6 L563.4 325.0 L563.5 326.4 L563.6 327.7 L563.6 329.1 L563.5 330.4 L563.3 331.8 L563.0 333.1 L562.7 334.4 L562.2 335.6 L561.8 336.9 L561.3 338.2 L560.8 339.4 L560.3 340.7 L559.9 341.9 L559.5 343.2 L559.2 344.5 L559.0 345.7 L558.9 347.1 L558.8 348.4 L558.8 349.8 L558.9 351.1 L559.0 352.5 L559.1 353.9 L559.1 355.3 L559.1 356.7 L559.0 358.0 L558.9 359.4 L558.6 360.6 L558.3 361.9 L557.8 363.1 L557.3 364.3 L556.6 365.4 L556.0 366.5 L555.3 367.6 L554.5 368.7 L553.9 369.8 L553.2 370.9 L552.7 372.0 L552.2 373.2 L551.8 374.3 L551.5 375.6 L551.2 376.9 L551.1 378.2 L551.0 379.5 L550.9 380.9 L550.9 382.3 L550.8 383.7 L550.7 385.0 L550.5 386.3 L550.2 387.6 L549.8 388.8 L549.3 390.0 L548.7 391.0 L548.0 392.0 L547.2 393.0 L546.3 393.9 L545.5 394.7 L544.6 395.6 L543.7 396.4 L542.9 397.3 L542.2 398.2 L541.5 399.1 L540.9 400.2 L540.5 401.3 L540.1 402.5 L539.8 403.7 L539.5 405.0 L539.3 406.3 L539.1 407.6 L538.9 409.0 L538.6 410.3 L538.3 411.5 L537.8 412.7 L537.3 413.8 L536.7 414.8 L536.0 415.7 L535.1 416.4 L534.2 417.1 L533.3 417.8 L532.3 418.4 L531.3 418.9 L530.3 419.5 L529.3 420.1 L528.5 420.7 L527.7 421.4 L527.0 422.2 L526.3 423.2 L525.8 424.2 L525.3 425.3 L524.9 426.5 L524.5 427.7 L524.2 428.9 L523.8 430.2 L523.4 431.4 L522.9 432.5 L522.3 433.6 L521.7 434.5 L521.0 435.3 L520.1 436.0 L519.2 436.5 L518.3 437.0 L517.3 437.3 L516.2 437.6 L515.1 437.8 L514.1 438.1 L513.1 438.3 L512.1 438.7 L511.3 439.1 L510.4 439.7 L509.7 440.4 L509.0 441.2 L508.4 442.1 L507.8 443.1 L507.3 444.2 L506.7 445.3 L506.2 446.4 L505.6 447.5 L505.0 448.5 L504.3 449.4 L503.6 450.1 L502.7 450.7 L501.9 451.2 L500.9 451.5 L499.9 451.6 L498.9 451.7 L497.9 451.6 L496.8 451.6 L495.8 451.5 L494.8 451.4 L493.8 451.5 L492.9 451.6 L492.0 451.9 L491.2 452.3 L490.4 452.8 L489.6 453.5 L488.9 454.3 L488.2 455.2 L487.5 456.1 L486.8 457.0 L486.0 457.9 L485.3 458.7 L484.5 459.4 L483.7 460.0 L482.8 460.4 L481.9 460.6 L480.9 460.6 L480.0 460.5 L479.0 460.3 L478.0 459.9 L477.0 459.5 L476.0 459.1 L475.1 458.8 L474.2 458.5 L473.2 458.3 L472.3 458.3 L471.5 458.4 L470.6 458.7 L469.8 459.1 L468.9 459.6 L468.1 460.2 L467.2 460.9 L466.4 461.6 L465.5 462.3 L464.6 462.9 L463.7 463.3 L462.8 463.6 L461.9 463.8 L461.0 463.8 L460.1 463.6 L459.2 463.2 L458.3 462.7 L457.4 462.1 L456.5 461.4 L455.7 460.7 L454.8 460.1 L454.0 459.5 L453.1 459.0 L452.3 458.7 L451.4 458.5 L450.5 458.5 L449.6 458.6 L448.7 458.8 L447.8 459.2 L446.8 459.6 L445.8 460.0 L444.8 460.4 L443.9 460.7 L442.9 460.9 L441.9 461.0 L441.0 460.9 L440.1 460.6 L439.3 460.2 L438.4 459.6 L437.6 458.9 L436.9 458.0 L436.2 457.1 L435.4 456.2 L434.7 455.3 L434.0 454.5 L433.3 453.7 L432.5 453.1 L431.7 452.6 L430.8 452.3 L429.9 452.1 L429.0 452.0 L428.0 452.1 L427.0 452.1 L425.9 452.2 L424.9 452.3 L423.8 452.4 L422.8 452.3 L421.9 452.1 L421.0 451.8 L420.1 451.3 L419.3 450.6 L418.6 449.8 L417.9 448.9 L417.3 447.9 L416.7 446.8 L416.2 445.7 L415.6 444.6 L415.1 443.5 L414.5 442.6 L413.8 441.7 L413.1 441.0 L412.3 440.4 L411.5 439.9 L410.5 439.5 L409.6 439.2 L408.5 438.9 L407.5 438.7 L406.4 438.5 L405.4 438.2 L404.4 437.9 L403.4 437.4 L402.6 436.8 L401.8 436.1 L401.1 435.3 L400.5 434.3 L399.9 433.2 L399.5 432.0 L399.1 430.8 L398.7 429.6 L398.3 428.3 L397.9 427.1 L397.5 426.0 L397.0 424.9 L396.4 424.0 L395.7 423.1 L394.9 422.4 L394.1 421.7 L393.2 421.1 L392.2 420.5 L391.2 420.0 L390.2 419.4 L389.2 418.9 L388.3 418.2 L387.4 417.5 L386.6 416.7 L385.9 415.8 L385.3 414.8 L384.8 413.6 L384.4 412.4 L384.1 411.2 L383.9 409.9 L383.6 408.5 L383.4 407.2 L383.2 405.9 L382.9 404.6 L382.6 403.4 L382.1 402.3 L381.6 401.2 L381.0 400.2 L380.3 399.3 L379.5 398.4 L378.7 397.6 L377.8 396.8 L376.9 395.9 L376.0 395.1 L375.2 394.2 L374.4 393.2 L373.7 392.2 L373.2 391.1 L372.7 390.0 L372.3 388.7 L372.1 387.5 L371.9 386.1 L371.8 384.8 L371.7 383.4 L371.6 382.0 L371.6 380.6 L371.4 379.3 L371.3 378.0 L371.0 376.7 L370.6 375.5 L370.2 374.4 L369.7 373.2 L369.1 372.1 L368.4 371.1 L367.7 370.0 L366.9 368.9 L366.2 367.8 L365.6 366.7 L365.0 365.6 L364.4 364.4 L364.0 363.2 L363.7 361.9 L363.5 360.6 L363.3 359.3 L363.3 357.9 L363.3 356.5 L363.4 355.1 L363.4 353.7 L363.5 352.4 L363.5 351.0 L363.5 349.7 L363.4 348.3 L363.2 347.0 L363.0 345.7 L362.6 344.5 L362.2 343.2 L361.7 342.0 L361.2 340.8 L360.8 339.5 L360.3 338.3 L359.9 337.0 L359.6 335.7 L359.3 334.4 L359.1 333.0 L359.0 331.7 L359.0 330.4 L358.9 329.0 L359.0 327.7 L359.0 326.3 L359.1 324.9 L359.1 323.6 L359.1 322.2 L359.1 320.9 L359.1 319.6 L359.1 318.2 L359.0 316.9 L358.9 315.5 L358.8 314.2 L358.7 312.9 L358.6 311.5 L358.6 310.2 L358.5 308.8 L358.5 307.5 L358.5 306.2 L358.4 304.8 L358.4 303.5 L358.5 302.1 L358.5 300.8 L358.5 299.4 L358.6 298.1 L358.7 296.8 L358.8 295.4 L358.9 294.1 L359.0 292.7 L359.1 291.4 L359.2 290.1 L359.4 288.7 L359.5 287.4 L359.6 286.1 L359.7 284.8 L359.9 283.4 L360.0 282.1 L360.1 280.8 L360.3 279.4 L360.4 278.1 L360.5 276.8 L360.7 275.5 L360.8 274.2 L361.0 272.8 L361.2 271.5 L361.4 270.2 L361.6 268.9 L361.9 267.6 L362.1 266.3 L362.4 265.0 L362.7 263.7 L363.0 262.5 L363.3 261.2 L363.6 259.9 L363.9 258.7 L364.2 257.4 L364.5 256.1 L364.8 254.9 L365.1 253.6 L365.4 252.4 L365.7 251.1 L366.0 249.8 L366.3 248.6 L366.6 247.3 L367.0 246.1 L367.3 244.8 L367.6 243.6 L368.0 242.4 L368.3 241.1 L368.7 239.9 L369.1 238.7 L369.6 237.5 L370.0 236.3 L370.4 235.2 L370.9 234.0 L371.4 232.9 L371.9 231.7 L372.3 230.6 L372.8 229.4 L373.3 228.3 L373.8 227.1 L374.2 226.0 L374.7 224.8 L375.1 223.7 L375.6 222.6 L376.1 221.4 L376.5 220.3 L377.0 219.1 L377.5 218.0 L378.0 216.9 L378.5 215.8 L379.0 214.7 L379.5 213.6 L380.1 212.6 L380.7 211.5 L381.2 210.5 L381.8 209.5 L382.5 208.5 L383.1 207.5 L383.7 206.5 L384.3 205.5 L384.9 204.6 L385.6 203.6 L386.2 202.6 L386.8 201.6 L387.4 200.7 L388.0 199.7 L388.6 198.7 L389.2 197.7 L389.8 196.7 L390.4 195.8 L391.0 194.8 L391.7 193.9 L392.3 192.9 L392.9 192.0 L393.6 191.1 L394.2 190.2 L394.9 189.3 L395.6 188.4 L396.4 187.6 L397.1 186.9 L397.9 186.2 L398.7 185.5 L399.6 184.8 L400.4 184.2 L401.2 183.5 L402.0 182.8 L402.7 182.1 L403.5 181.4 L404.2 180.5 L404.8 179.7 L405.4 178.7 L406.0 177.7 L406.6 176.7 L407.1 175.7 L407.7 174.7 L408.4 173.7 L409.0 172.9 L409.7 172.1 L410.5 171.4 L411.4 170.8 L412.3 170.4 L413.2 170.0 L414.2 169.8 L415.3 169.7 L416.3 169.6 L417.3 169.5 L418.3 169.3 L419.3 169.1 L420.2 168.8 L421.0 168.3 L421.8 167.7 L422.5 166.9 L423.1 166.1 L423.8 165.1 L424.4 164.1 L425.0 163.1 L425.7 162.0 L426.3 161.1 L427.1 160.2 L427.8 159.5 L428.6 158.9 L429.5 158.5 L430.4 158.3 L431.4 158.2 L432.4 158.2 L433.4 158.4 L434.4 158.6 L435.4 158.8 L436.5 159.1 L437.4 159.2 L438.4 159.3 L439.3 159.3 L440.2 159.1 L441.0 158.7 L441.8 158.3 L442.6 157.6 L443.4 156.9 L444.2 156.1 L445.0 155.3 L445.7 154.5 L446.6 153.8 L447.4 153.1 L448.3 152.6 L449.1 152.3 L450.0 152.1 L451.0 152.1 L451.9 152.2 L452.8 152.5 L453.8 153.0 L454.7 153.5 L455.7 154.0 L456.6 154.6 L457.5 155.0 L458.4 155.4 L459.2 155.7 L460.1 155.8 L461.0 155.8 L461.9 155.6 L462.8 155.2 L463.7 154.8 L464.6 154.3 L465.5 153.7 L466.4 153.2 L467.3 152.7 L468.3 152.3 L469.2 152.0 L470.1 151.9 L471.0 151.9 L471.9 152.2 L472.8 152.6 L473.7 153.1 L474.5 153.8 L475.3 154.6 L476.1 155.4 L476.9 156.2 L477.7 156.9 L478.5 157.6 L479.3 158.1 L480.1 158.5 L481.0 158.8 L481.9 158.9 L482.8 158.9 L483.8 158.7 L484.7 158.5 L485.7 158.3 L486.8 158.0 L487.8 157.8 L488.8 157.7 L489.8 157.7 L490.7 157.8 L491.6 158.1 L492.5 158.6 L493.3 159.2 L494.0 159.9 L494.7 160.8 L495.4 161.8 L496.0 162.8 L496.7 163.8 L497.3 164.8 L498.0 165.7 L498.7 166.5 L499.4 167.2 L500.2 167.8 L501.0 168.2 L502.0 168.4 L502.9 168.6 L503.9 168.7 L505.0 168.8 L506.0 168.9 L507.1 168.9 L508.1 169.1 L509.1 169.4 L510.1 169.8 L510.9 170.3 L511.7 171.0 L512.4 171.8 L513.0 172.7 L513.6 173.8 L514.1 174.9 L514.6 176.1 L515.1 177.3 L515.5 178.5 L516.0 179.6 L516.6 180.6 L517.2 181.5 L517.9 182.3 L518.7 183.0 L519.5 183.5 L520.4 184.0 L521.4 184.5 L522.4 184.8 L523.5 185.2 L524.5 185.6 L525.5 186.1 L526.5 186.6 L527.3 187.3 L528.1 188.0 L528.8 188.9 L529.4 189.9 L529.9 191.0 L530.4 192.2 L530.7 193.4 L531.0 194.7 L531.3 196.0 L531.6 197.3 L532.0 198.5 L532.4 199.7 L532.8 200.8 L533.4 201.8 L534.0 202.8 L534.8 203.6 L535.6 204.4 L536.5 205.1 L537.4 205.8 L538.4 206.5 L539.3 207.2 L540.2 207.9 L541.1 208.7 L541.9 209.6 L542.6 210.6 L543.2 211.6 L543.6 212.7 L544.0 213.9 L544.3 215.2 L544.5 216.6 L544.7 217.9 L544.8 219.3 L545.0 220.6 L545.1 222.0 L545.4 223.2 L545.7 224.5 L546.1 225.6 L546.5 226.8 L547.1 227.8 L547.8 228.8 L548.5 229.8 L549.3 230.8 L550.1 231.7 L550.9 232.7 L551.7 233.7 L552.4 234.7 L553.1 235.8 L553.7 236.9 L554.1 238.1 L554.5 239.3 L554.7 240.6 L554.8 242.0 L554.9 243.3 L554.9 244.7 L554.9 246.1 L554.9 247.5 L555.0 248.9 L555.0 250.2 L555.2 251.5 L555.4 252.8 L555.7 254.1 L556.1 255.3 L556.6 256.5 L557.1 257.6 L557.7 258.8 L558.3 260.0 L558.9 261.1 L559.5 262.3 L560.1 263.5 L560.6 264.8 L560.9 266.0 L561.2 267.3 L561.4 268.6 L561.5 270.0 L561.6 271.3 L561.5 272.7 L561.4 274.1 L561.3 275.5 L561.2 276.9 L561.0 278.2 L561.0 279.6 L560.9 280.9 L561.0 282.3 L561.1 283.6 L561.3 284.9 L561.6 286.2 L561.9 287.5 L562.3 288.8 L562.6 290.1 L563.0 291.4 L563.4 292.7 L563.7 294.0 L564.0 295.4 L564.2 296.7 L564.3 298.0 L564.3 299.4 L564.3 300.7 L564.2 302.1 L564.0 303.5 L563.8 304.8 L563.6 306.2 L563.3 307.5" stroke="#cf7e1c" stroke-width="1.2" fill="none"/>
<circle cx="384.5" cy="408" r="3.2" fill="#dc7a1a"/><circle cx="384.5" cy="408" r="1.6" fill="#ff9a30"/>
<rect x="506.2" y="435" width="7" height="7" fill="#0a0af0"/>
<path id="t4" d="M22 521 C30 530 45 543 60 542.5 C70 542 75 533 80 532 C84 533 90 542 99 541.7 C108 541 115 526 122 525.7 C130 527 138 538 148 538 C156 538 162 527 166.5 525.7 C170 527 176 534 181 534 C187 533 190 521 194 520 C198 520 208 527 215 528 C224 528 222 521 218 519.5 C230 523 262 536 278 538.5 C284 538 280 528 274 526 C290 530 310 536 326.5 538.5 C332 538 328 529 323 527 C340 531 360 536 375 537.8 C384 538 378 528 371.5 526.4 C385 531 402 537 416 538.8 C412 536 398 530 392 528 C410 532 435 540 451.5 539.7 C456 539.5 459.5 538 459 536.3 C455 533 449 530 445 528.3 C450 530.5 455 534 460 535.6 C466 537 470 537.3 473 537.5 C482 538.5 492 540.5 500 540 L506 538.2 L531 540.5 L545 543.2 L556 544.5 M554 543.5 L552.3 547.2 M500.8 539.7 L500.5 540.0 L500.0 540.1 L499.3 540.1 L498.4 540.0 L497.2 539.7 L495.9 539.4 L494.5 538.9 L492.9 538.3 L491.3 537.7 L489.7 537.0 L488.1 536.3 L486.6 535.5 L485.2 534.7 L483.9 533.9 L482.8 533.2 L481.8 532.5 L481.1 531.9 L480.6 531.3 L480.4 530.8 L480.4 530.5 L480.7 530.2 L481.2 530.1 L481.9 530.1 L482.8 530.2 L484.0 530.5 L485.3 530.8 L486.7 531.3 L488.3 531.9 L489.9 532.5 L491.5 533.2 L493.1 533.9 L494.6 534.7 L496.0 535.5 L497.3 536.3 L498.4 537.0 L499.4 537.7 L500.1 538.3 L500.6 538.9 L500.8 539.4 L500.8 539.7M522.2 538.6 L522.0 538.9 L521.6 539.1 L521.0 539.2 L520.2 539.2 L519.2 539.2 L518.0 539.0 L516.7 538.8 L515.4 538.6 L513.9 538.2 L512.5 537.8 L511.0 537.4 L509.7 536.9 L508.3 536.4 L507.2 535.9 L506.1 535.4 L505.2 534.9 L504.5 534.5 L504.1 534.0 L503.8 533.7 L503.8 533.4 L504.0 533.1 L504.4 532.9 L505.0 532.8 L505.8 532.8 L506.8 532.8 L508.0 533.0 L509.3 533.2 L510.6 533.4 L512.1 533.8 L513.5 534.2 L515.0 534.6 L516.3 535.1 L517.7 535.6 L518.8 536.1 L519.9 536.6 L520.8 537.1 L521.5 537.5 L521.9 538.0 L522.2 538.3 L522.2 538.6M531.1 539.8 L530.9 540.0 L530.5 540.2 L529.9 540.3 L529.1 540.3 L528.1 540.3 L527.0 540.2 L525.8 539.9 L524.5 539.7 L523.1 539.3 L521.7 538.9 L520.4 538.5 L519.1 538.0 L517.8 537.5 L516.7 537.0 L515.7 536.5 L514.9 536.0 L514.2 535.5 L513.8 535.1 L513.5 534.7 L513.5 534.4 L513.7 534.2 L514.1 534.0 L514.7 533.9 L515.5 533.9 L516.5 533.9 L517.6 534.0 L518.8 534.3 L520.1 534.5 L521.5 534.9 L522.9 535.3 L524.2 535.7 L525.5 536.2 L526.8 536.7 L527.9 537.2 L528.9 537.7 L529.7 538.2 L530.4 538.7 L530.8 539.1 L531.1 539.5 L531.1 539.8M554.4 543.1 L554.2 543.3 L553.7 543.5 L553.0 543.6 L552.0 543.6 L550.8 543.5 L549.5 543.3 L548.0 543.1 L546.4 542.7 L544.8 542.3 L543.1 541.8 L541.4 541.3 L539.8 540.7 L538.3 540.1 L536.9 539.5 L535.7 538.9 L534.7 538.3 L533.9 537.8 L533.3 537.3 L533.0 536.9 L533.0 536.5 L533.2 536.3 L533.7 536.1 L534.4 536.0 L535.4 536.0 L536.6 536.1 L537.9 536.3 L539.4 536.5 L541.0 536.9 L542.6 537.3 L544.3 537.8 L546.0 538.3 L547.6 538.9 L549.1 539.5 L550.5 540.1 L551.7 540.7 L552.7 541.3 L553.5 541.8 L554.1 542.3 L554.4 542.7 L554.4 543.1M583.4 546.8 L583.1 547.1 L582.6 547.4 L581.7 547.5 L580.6 547.6 L579.2 547.7 L577.5 547.6 L575.7 547.4 L573.7 547.2 L571.7 546.9 L569.6 546.6 L567.5 546.1 L565.5 545.7 L563.6 545.2 L561.8 544.7 L560.2 544.1 L558.9 543.6 L557.9 543.1 L557.2 542.6 L556.7 542.2 L556.6 541.8 L556.9 541.5 L557.4 541.2 L558.3 541.1 L559.4 541.0 L560.8 540.9 L562.5 541.0 L564.3 541.2 L566.3 541.4 L568.3 541.7 L570.4 542.0 L572.5 542.5 L574.5 542.9 L576.4 543.4 L578.2 543.9 L579.8 544.5 L581.1 545.0 L582.1 545.5 L582.8 546.0 L583.3 546.4 L583.4 546.8" stroke="#d8981e" stroke-width="1.35" fill="none" stroke-linejoin="round"/>
<circle cx="452.4" cy="530.8" r="3" fill="#e0901c"/><circle cx="452.4" cy="530.8" r="1.5" fill="#ffb030"/>
<rect x="0.4" y="68.7" width="9.6" height="10" rx="1.6" fill="#e6e6e6"/>
<rect x="1.5" y="69.7" width="7.8" height="8" rx="0.8" fill="#cc5a18"/>
<text x="5.2" y="76.1" font-family='"DejaVu Sans","Liberation Sans",sans-serif' font-size="6.6" fill="#0a0a0a" text-anchor="middle">1</text>
<rect x="80.8" y="291.1" width="9.4" height="9.4" rx="1.4" fill="#c85e18"/>
<text x="85.5" y="298.2" font-family='"DejaVu Sans","Liberation Sans",sans-serif' font-size="6.6" fill="#4a2c10" text-anchor="middle">2</text>
<rect x="355.4" y="305.6" width="9.4" height="9.4" rx="1.4" fill="#cc7a1c"/>
<text x="360.1" y="312.7" font-family='"DejaVu Sans","Liberation Sans",sans-serif' font-size="6.6" fill="#4a2c10" text-anchor="middle">3</text>
<rect x="17.8" y="514.3" width="8.4" height="8.4" rx="1.4" fill="#e09c20"/>
<text x="22.0" y="520.9" font-family='"DejaVu Sans","Liberation Sans",sans-serif' font-size="6.6" fill="#4a2c10" text-anchor="middle">4</text>
</g>
<rect x="659.5" y="32" width="132.5" height="568" fill="#ececeb"/>
<text x="725.5" y="42.8" font-family='"DejaVu Sans Mono","Liberation Mono",monospace' font-size="8.8" fill="#303030" text-anchor="middle">Trajectories</text>
<rect x="669.3" y="48.0" width="54.7" height="19.3" rx="1.8" fill="url(#gBtn)" stroke="#b4b4b2" stroke-width="0.8"/>
<text x="676.5" y="60.9" font-family='"DejaVu Sans Mono","Liberation Mono",monospace' font-size="8.8" fill="#303030">Free</text>
<path d="M712.0 56.6 h5 l-2.5 2.8z" fill="#303030"/>
<rect x="727.4" y="48.0" width="54.7" height="19.3" rx="1.8" fill="url(#gBtn)" stroke="#b4b4b2" stroke-width="0.8"/>
<text x="754.8" y="60.1" font-family='"DejaVu Sans","Liberation Sans",sans-serif' font-size="6.8" fill="#3a3a3a" text-anchor="middle">Closed</text>
<rect x="662.5" y="74.2" width="124.3" height="108" fill="#f1f1f0" stroke="#cfcfce" stroke-width="0.8"/>
<text x="693.3" y="87.9" font-family='"DejaVu Sans Mono","Liberation Mono",monospace' font-size="9" font-weight="bold" fill="#303030" text-anchor="middle">Drawing</text>
<text x="752" y="87.9" font-family='"DejaVu Sans Mono","Liberation Mono",monospace' font-size="9" font-weight="bold" fill="#a2a2a2" text-anchor="middle">Playback</text>
<rect x="667.8" y="94" width="51.2" height="1.6" fill="#3f8ad8"/>
<text x="666.2" y="105.3" font-family='"DejaVu Sans Mono","Liberation Mono",monospace' font-size="6.9" fill="#303030">Lowpass cutoff</text>
<rect x="666.2" y="109.2" width="114.6" height="6.2" rx="2" fill="url(#gTrk1)"/>
<rect x="737.5" y="107.7" width="22.6" height="9.4" rx="2" fill="url(#gKnobA)"/>
<text x="748.8" y="114.4" font-family='"DejaVu Sans","Liberation Sans",sans-serif' font-size="5.6" fill="#ffffff" text-anchor="middle">4998</text>
<text x="666.2" y="126.5" font-family='"DejaVu Sans Mono","Liberation Mono",monospace' font-size="6.9" fill="#303030">Lowpass Q</text>
<rect x="666.2" y="130.4" width="114.6" height="6.2" rx="2" fill="url(#gTrk1)"/>
<rect x="730.9" y="128.9" width="22.6" height="9.4" rx="2" fill="url(#gKnobA)"/>
<text x="742.2" y="135.6" font-family='"DejaVu Sans","Liberation Sans",sans-serif' font-size="5.6" fill="#ffffff" text-anchor="middle">709.82</text>
<text x="666.2" y="147.8" font-family='"DejaVu Sans Mono","Liberation Mono",monospace' font-size="6.9" fill="#303030">Oscil period</text>
<rect x="666.2" y="151.7" width="114.6" height="6.2" rx="2" fill="url(#gTrk2)"/>
<rect x="702.5" y="150.2" width="22.6" height="9.4" rx="2" fill="url(#gKnobB)"/>
<text x="713.8" y="156.9" font-family='"DejaVu Sans","Liberation Sans",sans-serif' font-size="5.6" fill="#ffffff" text-anchor="middle">2.0000</text>
<text x="666.2" y="169.0" font-family='"DejaVu Sans Mono","Liberation Mono",monospace' font-size="6.9" fill="#303030">Oscil scaling</text>
<rect x="666.2" y="172.9" width="114.6" height="6.2" rx="2" fill="url(#gTrk2)"/>
<rect x="688.4" y="171.4" width="22.6" height="9.4" rx="2" fill="url(#gKnobB)"/>
<text x="699.7" y="178.1" font-family='"DejaVu Sans","Liberation Sans",sans-serif' font-size="5.6" fill="#ffffff" text-anchor="middle">1.0000</text>
<text x="725.5" y="193.6" font-family='"DejaVu Sans Mono","Liberation Mono",monospace' font-size="8.8" fill="#303030" text-anchor="middle">4 Bands Equalizer</text>
<rect x="672.2" y="195.0" width="24" height="43" fill="#f1f1f0"/>
<text x="684.2" y="201.9" font-family='"DejaVu Sans","Liberation Sans",sans-serif' font-size="5.5" fill="#222" text-anchor="middle" stroke="#222" stroke-width="0.22">freq 1</text>
<path d="M678.90 220.90L676.70 223.10M677.27 218.47L674.41 219.66M676.70 215.60L673.60 215.60M677.27 212.73L674.41 211.54M678.90 210.30L676.70 208.10M681.33 208.67L680.14 205.81M684.20 208.10L684.20 205.00M687.07 208.67L688.26 205.81M689.50 210.30L691.70 208.10M691.13 212.73L693.99 211.54M691.70 215.60L694.80 215.60M691.13 218.47L693.99 219.66M689.50 220.90L691.70 223.10" stroke="#868686" stroke-width="0.85"/>
<circle cx="684.2" cy="215.6" r="8.6" fill="#6c6c6c" opacity="0.55"/>
<circle cx="684.2" cy="215.6" r="7.5" fill="url(#gDial)" stroke="#55565e" stroke-width="0.9"/>
<circle cx="680.4" cy="214.2" r="1.55" fill="#0a0a0a"/>
<text x="684.2" y="234.4" font-family='"DejaVu Sans","Liberation Sans",sans-serif' font-size="5.4" fill="#333" text-anchor="middle">100.00</text>
<rect x="712.2" y="195.0" width="24" height="43" fill="#f1f1f0"/>
<text x="724.2" y="201.9" font-family='"DejaVu Sans","Liberation Sans",sans-serif' font-size="5.5" fill="#222" text-anchor="middle" stroke="#222" stroke-width="0.22">freq 2</text>
<path d="M718.90 220.90L716.70 223.10M717.27 218.47L714.41 219.66M716.70 215.60L713.60 215.60M717.27 212.73L714.41 211.54M718.90 210.30L716.70 208.10M721.33 208.67L720.14 205.81M724.20 208.10L724.20 205.00M727.07 208.67L728.26 205.81M729.50 210.30L731.70 208.10M731.13 212.73L733.99 211.54M731.70 215.60L734.80 215.60M731.13 218.47L733.99 219.66M729.50 220.90L731.70 223.10" stroke="#868686" stroke-width="0.85"/>
<circle cx="724.2" cy="215.6" r="8.6" fill="#6c6c6c" opacity="0.55"/>
<circle cx="724.2" cy="215.6" r="7.5" fill="url(#gDial)" stroke="#55565e" stroke-width="0.9"/>
<circle cx="720.5" cy="214.2" r="1.55" fill="#0a0a0a"/>
<text x="724.2" y="234.4" font-family='"DejaVu Sans","Liberation Sans",sans-serif' font-size="5.4" fill="#333" text-anchor="middle">500.00</text>
<rect x="752.5" y="195.0" width="24" height="43" fill="#f1f1f0"/>
<text x="764.5" y="201.9" font-family='"DejaVu Sans","Liberation Sans",sans-serif' font-size="5.5" fill="#222" text-anchor="middle" stroke="#222" stroke-width="0.22">freq 3</text>
<path d="M759.20 220.90L757.00 223.10M757.57 218.47L754.71 219.66M757.00 215.60L753.90 215.60M757.57 212.73L754.71 211.54M759.20 210.30L757.00 208.10M761.63 208.67L760.44 205.81M764.50 208.10L764.50 205.00M767.37 208.67L768.56 205.81M769.80 210.30L772.00 208.10M771.43 212.73L774.29 211.54M772.00 215.60L775.10 215.60M771.43 218.47L774.29 219.66M769.80 220.90L772.00 223.10" stroke="#868686" stroke-width="0.85"/>
<circle cx="764.5" cy="215.6" r="8.6" fill="#6c6c6c" opacity="0.55"/>
<circle cx="764.5" cy="215.6" r="7.5" fill="url(#gDial)" stroke="#55565e" stroke-width="0.9"/>
<circle cx="760.2" cy="216.3" r="1.55" fill="#0a0a0a"/>
<text x="764.5" y="234.4" font-family='"DejaVu Sans","Liberation Sans",sans-serif' font-size="5.4" fill="#333" text-anchor="middle">2000.00</text>
<rect x="663.3" y="236.3" width="24" height="43" fill="#f1f1f0"/>
<text x="675.3" y="243.2" font-family='"DejaVu Sans","Liberation Sans",sans-serif' font-size="5.5" fill="#222" text-anchor="middle" stroke="#222" stroke-width="0.22">B1 gain</text>
<path d="M670.00 262.80L667.80 265.00M668.37 260.37L665.51 261.56M667.80 257.50L664.70 257.50M668.37 254.63L665.51 253.44M670.00 252.20L667.80 250.00M672.43 250.57L671.24 247.71M675.30 250.00L675.30 246.90M678.17 250.57L679.36 247.71M680.60 252.20L682.80 250.00M682.23 254.63L685.09 253.44M682.80 257.50L685.90 257.50M682.23 260.37L685.09 261.56M680.60 262.80L682.80 265.00" stroke="#868686" stroke-width="0.85"/>
<circle cx="675.3" cy="257.5" r="8.6" fill="#6c6c6c" opacity="0.55"/>
<circle cx="675.3" cy="257.5" r="7.5" fill="url(#gDial)" stroke="#55565e" stroke-width="0.9"/>
<circle cx="680.5" cy="258.0" r="1.55" fill="#0a0a0a"/>
<text x="675.3" y="275.6" font-family='"DejaVu Sans","Liberation Sans",sans-serif' font-size="5.4" fill="#333" text-anchor="middle">6.670</text>
<rect x="695.5" y="236.3" width="24" height="43" fill="#f1f1f0"/>
<text x="707.5" y="243.2" font-family='"DejaVu Sans","Liberation Sans",sans-serif' font-size="5.5" fill="#222" text-anchor="middle" stroke="#222" stroke-width="0.22">B2 gain</text>
<path d="M702.20 262.80L700.00 265.00M700.57 260.37L697.71 261.56M700.00 257.50L696.90 257.50M700.57 254.63L697.71 253.44M702.20 252.20L700.00 250.00M704.63 250.57L703.44 247.71M707.50 250.00L707.50 246.90M710.37 250.57L711.56 247.71M712.80 252.20L715.00 250.00M714.43 254.63L717.29 253.44M715.00 257.50L718.10 257.50M714.43 260.37L717.29 261.56M712.80 262.80L715.00 265.00" stroke="#868686" stroke-width="0.85"/>
<circle cx="707.5" cy="257.5" r="8.6" fill="#6c6c6c" opacity="0.55"/>
<circle cx="707.5" cy="257.5" r="7.5" fill="url(#gDial)" stroke="#55565e" stroke-width="0.9"/>
<circle cx="711.7" cy="255.0" r="1.55" fill="#0a0a0a"/>
<text x="707.5" y="275.6" font-family='"DejaVu Sans","Liberation Sans",sans-serif' font-size="5.4" fill="#333" text-anchor="middle">0.000</text>
<rect x="727.2" y="236.3" width="24" height="43" fill="#f1f1f0"/>
<text x="739.2" y="243.2" font-family='"DejaVu Sans","Liberation Sans",sans-serif' font-size="5.5" fill="#222" text-anchor="middle" stroke="#222" stroke-width="0.22">B3 gain</text>
<path d="M733.90 262.80L731.70 265.00M732.27 260.37L729.41 261.56M731.70 257.50L728.60 257.50M732.27 254.63L729.41 253.44M733.90 252.20L731.70 250.00M736.33 250.57L735.14 247.71M739.20 250.00L739.20 246.90M742.07 250.57L743.26 247.71M744.50 252.20L746.70 250.00M746.13 254.63L748.99 253.44M746.70 257.50L749.80 257.50M746.13 260.37L748.99 261.56M744.50 262.80L746.70 265.00" stroke="#868686" stroke-width="0.85"/>
<circle cx="739.2" cy="257.5" r="8.6" fill="#6c6c6c" opacity="0.55"/>
<circle cx="739.2" cy="257.5" r="7.5" fill="url(#gDial)" stroke="#55565e" stroke-width="0.9"/>
<circle cx="743.3" cy="255.0" r="1.55" fill="#0a0a0a"/>
<text x="739.2" y="275.6" font-family='"DejaVu Sans","Liberation Sans",sans-serif' font-size="5.4" fill="#333" text-anchor="middle">0.000</text>
<rect x="758.8" y="236.3" width="24" height="43" fill="#f1f1f0"/>
<text x="770.8" y="243.2" font-family='"DejaVu Sans","Liberation Sans",sans-serif' font-size="5.5" fill="#222" text-anchor="middle" stroke="#222" stroke-width="0.22">B4 gain</text>
<path d="M765.50 262.80L763.30 265.00M763.87 260.37L761.01 261.56M763.30 257.50L760.20 257.50M763.87 254.63L761.01 253.44M765.50 252.20L763.30 250.00M767.93 250.57L766.74 247.71M770.80 250.00L770.80 246.90M773.67 250.57L774.86 247.71M776.10 252.20L778.30 250.00M777.73 254.63L780.59 253.44M778.30 257.50L781.40 257.50M777.73 260.37L780.59 261.56M776.10 262.80L778.30 265.00" stroke="#868686" stroke-width="0.85"/>
<circle cx="770.8" cy="257.5" r="8.6" fill="#6c6c6c" opacity="0.55"/>
<circle cx="770.8" cy="257.5" r="7.5" fill="url(#gDial)" stroke="#55565e" stroke-width="0.9"/>
<circle cx="775.5" cy="257.5" r="1.55" fill="#0a0a0a"/>
<text x="770.8" y="275.6" font-family='"DejaVu Sans","Liberation Sans",sans-serif' font-size="5.4" fill="#333" text-anchor="middle">4.930</text>
<rect x="662.5" y="282.2" width="124" height="0.9" fill="#d6d6d5"/>
<text x="725.5" y="293.5" font-family='"DejaVu Sans Mono","Liberation Mono",monospace' font-size="8.8" fill="#303030" text-anchor="middle">Dynamic Compressor</text>
<rect x="662.9" y="294.5" width="24" height="43" fill="#f1f1f0"/>
<text x="674.9" y="301.4" font-family='"DejaVu Sans","Liberation Sans",sans-serif' font-size="5.5" fill="#222" text-anchor="middle" stroke="#222" stroke-width="0.22">Thresh</text>
<path d="M669.60 321.70L667.40 323.90M667.97 319.27L665.11 320.46M667.40 316.40L664.30 316.40M667.97 313.53L665.11 312.34M669.60 311.10L667.40 308.90M672.03 309.47L670.84 306.61M674.90 308.90L674.90 305.80M677.77 309.47L678.96 306.61M680.20 311.10L682.40 308.90M681.83 313.53L684.69 312.34M682.40 316.40L685.50 316.40M681.83 319.27L684.69 320.46M680.20 321.70L682.40 323.90" stroke="#868686" stroke-width="0.85"/>
<circle cx="674.9" cy="316.4" r="8.6" fill="#6c6c6c" opacity="0.55"/>
<circle cx="674.9" cy="316.4" r="7.5" fill="url(#gDial)" stroke="#55565e" stroke-width="0.9"/>
<circle cx="679.3" cy="318.4" r="1.55" fill="#0a0a0a"/>
<text x="674.9" y="333.9" font-family='"DejaVu Sans","Liberation Sans",sans-serif' font-size="5.4" fill="#333" text-anchor="middle">-6.300</text>
<rect x="694.8" y="294.5" width="24" height="43" fill="#f1f1f0"/>
<text x="706.8" y="301.4" font-family='"DejaVu Sans","Liberation Sans",sans-serif' font-size="5.5" fill="#222" text-anchor="middle" stroke="#222" stroke-width="0.22">Ratio</text>
<path d="M701.50 321.70L699.30 323.90M699.87 319.27L697.01 320.46M699.30 316.40L696.20 316.40M699.87 313.53L697.01 312.34M701.50 311.10L699.30 308.90M703.93 309.47L702.74 306.61M706.80 308.90L706.80 305.80M709.67 309.47L710.86 306.61M712.10 311.10L714.30 308.90M713.73 313.53L716.59 312.34M714.30 316.40L717.40 316.40M713.73 319.27L716.59 320.46M712.10 321.70L714.30 323.90" stroke="#868686" stroke-width="0.85"/>
<circle cx="706.8" cy="316.4" r="8.6" fill="#6c6c6c" opacity="0.55"/>
<circle cx="706.8" cy="316.4" r="7.5" fill="url(#gDial)" stroke="#55565e" stroke-width="0.9"/>
<circle cx="706.0" cy="311.7" r="1.55" fill="#0a0a0a"/>
<text x="706.8" y="333.9" font-family='"DejaVu Sans","Liberation Sans",sans-serif' font-size="5.4" fill="#333" text-anchor="middle">5.105</text>
<rect x="727.0" y="294.5" width="24" height="43" fill="#f1f1f0"/>
<text x="739.0" y="301.4" font-family='"DejaVu Sans","Liberation Sans",sans-serif' font-size="5.5" fill="#222" text-anchor="middle" stroke="#222" stroke-width="0.22">Rise</text>
<path d="M733.70 321.70L731.50 323.90M732.07 319.27L729.21 320.46M731.50 316.40L728.40 316.40M732.07 313.53L729.21 312.34M733.70 311.10L731.50 308.90M736.13 309.47L734.94 306.61M739.00 308.90L739.00 305.80M741.87 309.47L743.06 306.61M744.30 311.10L746.50 308.90M745.93 313.53L748.79 312.34M746.50 316.40L749.60 316.40M745.93 319.27L748.79 320.46M744.30 321.70L746.50 323.90" stroke="#868686" stroke-width="0.85"/>
<circle cx="739.0" cy="316.4" r="8.6" fill="#6c6c6c" opacity="0.55"/>
<circle cx="739.0" cy="316.4" r="7.5" fill="url(#gDial)" stroke="#55565e" stroke-width="0.9"/>
<circle cx="735.6" cy="318.4" r="1.55" fill="#0a0a0a"/>
<text x="739.0" y="333.9" font-family='"DejaVu Sans","Liberation Sans",sans-serif' font-size="5.4" fill="#333" text-anchor="middle">0.050</text>
<rect x="759.0" y="294.5" width="24" height="43" fill="#f1f1f0"/>
<text x="771.0" y="301.4" font-family='"DejaVu Sans","Liberation Sans",sans-serif' font-size="5.5" fill="#222" text-anchor="middle" stroke="#222" stroke-width="0.22">Fall</text>
<path d="M765.70 321.70L763.50 323.90M764.07 319.27L761.21 320.46M763.50 316.40L760.40 316.40M764.07 313.53L761.21 312.34M765.70 311.10L763.50 308.90M768.13 309.47L766.94 306.61M771.00 308.90L771.00 305.80M773.87 309.47L775.06 306.61M776.30 311.10L778.50 308.90M777.93 313.53L780.79 312.34M778.50 316.40L781.60 316.40M777.93 319.27L780.79 320.46M776.30 321.70L778.50 323.90" stroke="#868686" stroke-width="0.85"/>
<circle cx="771.0" cy="316.4" r="8.6" fill="#6c6c6c" opacity="0.55"/>
<circle cx="771.0" cy="316.4" r="7.5" fill="url(#gDial)" stroke="#55565e" stroke-width="0.9"/>
<circle cx="766.3" cy="316.9" r="1.55" fill="#0a0a0a"/>
<text x="771.0" y="333.9" font-family='"DejaVu Sans","Liberation Sans",sans-serif' font-size="5.4" fill="#333" text-anchor="middle">0.200</text>
<rect x="662.5" y="340.0" width="124" height="0.9" fill="#d6d6d5"/>
<text x="665.3" y="358" font-family='"DejaVu Sans Mono","Liberation Mono",monospace' font-size="8.8" fill="#303030">Global amplitude (dB)</text>
<rect x="665.0" y="361.8" width="118.3" height="6.2" rx="2" fill="url(#gTrk3)"/>
<rect x="739.3" y="360.3" width="22.6" height="9.4" rx="2" fill="url(#gKnobA)"/>
<text x="750.6" y="367.0" font-family='"DejaVu Sans","Liberation Sans",sans-serif' font-size="5.6" fill="#ffffff" text-anchor="middle">0.9379</text>
<rect x="665" y="375.5" width="118.3" height="7.2" fill="#062a06"/>
<rect x="665.80" y="376" width="4.97" height="2.9" fill="#10c810"/>
<rect x="665.80" y="379.4" width="4.97" height="2.9" fill="#10c810"/>
<rect x="671.77" y="376" width="4.97" height="2.9" fill="#10c810"/>
<rect x="671.77" y="379.4" width="4.97" height="2.9" fill="#10c810"/>
<rect x="677.74" y="376" width="4.97" height="2.9" fill="#10c810"/>
<rect x="677.74" y="379.4" width="4.97" height="2.9" fill="#10c810"/>
<rect x="683.71" y="376" width="4.97" height="2.9" fill="#10c810"/>
<rect x="683.71" y="379.4" width="4.97" height="2.9" fill="#10c810"/>
<rect x="689.68" y="376" width="4.97" height="2.9" fill="#10c810"/>
<rect x="689.68" y="379.4" width="4.97" height="2.9" fill="#10c810"/>
<rect x="695.65" y="376" width="4.97" height="2.9" fill="#10c810"/>
<rect x="695.65" y="379.4" width="4.97" height="2.9" fill="#10c810"/>
<rect x="701.62" y="376" width="4.97" height="2.9" fill="#10c810"/>
<rect x="701.62" y="379.4" width="4.97" height="2.9" fill="#10c810"/>
<rect x="707.59" y="376" width="4.97" height="2.9" fill="#10c810"/>
<rect x="707.59" y="379.4" width="4.97" height="2.9" fill="#10c810"/>
<rect x="713.56" y="376" width="4.97" height="2.9" fill="#10c810"/>
<rect x="713.56" y="379.4" width="4.97" height="2.9" fill="#10c810"/>
<rect x="719.53" y="376" width="4.97" height="2.9" fill="#10c810"/>
<rect x="719.53" y="379.4" width="4.97" height="2.9" fill="#10c810"/>
<rect x="725.50" y="376" width="4.97" height="2.9" fill="#10c810"/>
<rect x="725.50" y="379.4" width="4.97" height="2.9" fill="#10c810"/>
<rect x="731.47" y="376" width="4.97" height="2.9" fill="#10c810"/>
<rect x="731.47" y="379.4" width="4.97" height="2.9" fill="#10c810"/>
<rect x="737.44" y="376" width="4.97" height="2.9" fill="#10c810"/>
<rect x="737.44" y="379.4" width="4.97" height="2.9" fill="#10c810"/>
<rect x="743.41" y="376" width="4.97" height="2.9" fill="#10c810"/>
<rect x="743.41" y="379.4" width="4.97" height="2.9" fill="#10c810"/>
<rect x="749.38" y="376" width="4.97" height="2.9" fill="#6a5c12"/>
<rect x="749.38" y="379.4" width="4.97" height="2.9" fill="#d4cc20"/>
<rect x="755.35" y="376" width="4.97" height="2.9" fill="#6a5c12"/>
<rect x="755.35" y="379.4" width="4.97" height="2.9" fill="#d4cc20"/>
<rect x="761.32" y="376" width="4.97" height="2.9" fill="#5a4a10"/>
<rect x="761.32" y="379.4" width="4.97" height="2.9" fill="#5a4a10"/>
<rect x="767.29" y="376" width="4.97" height="2.9" fill="#4e0a0a"/>
<rect x="767.29" y="379.4" width="4.97" height="2.9" fill="#4e0a0a"/>
<rect x="773.26" y="376" width="4.97" height="2.9" fill="#4e0a0a"/>
<rect x="773.26" y="379.4" width="4.97" height="2.9" fill="#4e0a0a"/>
<rect x="779.23" y="376" width="4.07" height="2.9" fill="#4e0a0a"/>
<rect x="779.23" y="379.4" width="4.07" height="2.9" fill="#4e0a0a"/>
<rect x="662.5" y="388.0" width="124" height="0.9" fill="#d6d6d5"/>
<text x="725.5" y="402.6" font-family='"DejaVu Sans Mono","Liberation Mono",monospace' font-size="8.8" fill="#303030" text-anchor="middle">Project Settings</text>
<text x="701.3" y="416.9" font-family='"DejaVu Sans Mono","Liberation Mono",monospace' font-size="8.8" fill="#303030" text-anchor="middle">Rate</text>
<text x="754.3" y="416.9" font-family='"DejaVu Sans Mono","Liberation Mono",monospace' font-size="8.8" fill="#303030" text-anchor="middle">Chnls</text>
<rect x="676.7" y="419.8" width="48.8" height="18.4" rx="1.8" fill="#efefee" stroke="#b4b4b2" stroke-width="0.8"/>
<text x="683.0" y="432.2" font-family='"DejaVu Sans Mono","Liberation Mono",monospace' font-size="8.8" fill="#a4a4a4">44100</text>
<path d="M713.5 428.0 h5 l-2.5 2.8z" fill="#a4a4a4"/>
<rect x="737.3" y="419.8" width="35.6" height="18.4" rx="1.5" fill="#f4f4f3" stroke="#c4c4c2" stroke-width="0.8"/>
<text x="745" y="432.2" font-family='"DejaVu Sans Mono","Liberation Mono",monospace' font-size="8.8" fill="#a4a4a4">2</text>
<rect x="662.5" y="444.6" width="124" height="0.9" fill="#d6d6d5"/>
<rect x="702.3" y="451.3" width="46.4" height="19.6" rx="1.8" fill="#dddddc" stroke="#b4b4b2" stroke-width="0.8"/>
<text x="725.5" y="463.6" font-family='"DejaVu Sans","Liberation Sans",sans-serif' font-size="6.8" fill="#3a3a3a" text-anchor="middle">Stop</text>
<rect x="662.5" y="477.2" width="124" height="0.9" fill="#d6d6d5"/>
<text x="725.5" y="492.2" font-family='"DejaVu Sans Mono","Liberation Mono",monospace' font-size="8.8" fill="#303030" text-anchor="middle">Record Settings</text>
<text x="691.8" y="505.9" font-family='"DejaVu Sans Mono","Liberation Mono",monospace' font-size="8.8" fill="#303030" text-anchor="middle">Format</text>
<text x="755" y="505.9" font-family='"DejaVu Sans Mono","Liberation Mono",monospace' font-size="8.8" fill="#303030" text-anchor="middle">Type</text>
<rect x="669.5" y="509.0" width="46.1" height="18.5" rx="1.8" fill="url(#gBtn)" stroke="#b4b4b2" stroke-width="0.8"/>
<text x="675.0" y="521.5" font-family='"DejaVu Sans Mono","Liberation Mono",monospace' font-size="8.8" fill="#303030">WAV</text>
<path d="M703.5 517.2 h5 l-2.5 2.8z" fill="#303030"/>
<rect x="728.4" y="509.0" width="54.0" height="18.5" rx="1.8" fill="url(#gBtn)" stroke="#b4b4b2" stroke-width="0.8"/>
<text x="734.0" y="521.5" font-family='"DejaVu Sans Mono","Liberation Mono",monospace' font-size="8.8" fill="#303030">16 int</text>
<path d="M771.0 517.2 h5 l-2.5 2.8z" fill="#303030"/>
<text x="669.5" y="542.5" font-family='"DejaVu Sans Mono","Liberation Mono",monospace' font-size="8.8" fill="#303030">Destination</text>
<rect x="668.5" y="545" width="70" height="19" rx="1.5" fill="#ffffff" stroke="#c4c4c2" stroke-width="0.8"/>
<text x="673.5" y="557.8" font-family='"DejaVu Sans Mono","Liberation Mono",monospace' font-size="8.8" fill="#303030">~/Desktop</text>
<rect x="745.2" y="544.8" width="37.8" height="19.2" rx="1.8" fill="url(#gBtn)" stroke="#b4b4b2" stroke-width="0.8"/>
<text x="764.1" y="556.9" font-family='"DejaVu Sans","Liberation Sans",sans-serif' font-size="6.8" fill="#3a3a3a" text-anchor="middle">Choose</text>
<text x="669.5" y="575.9" font-family='"DejaVu Sans Mono","Liberation Mono",monospace' font-size="8.8" fill="#303030">Filename</text>
<rect x="668.5" y="578.4" width="70" height="19" rx="1.5" fill="#ffffff" stroke="#c4c4c2" stroke-width="0.8"/>
<text x="673.5" y="591.2" font-family='"DejaVu Sans Mono","Liberation Mono",monospace' font-size="8.8" fill="#303030">snd</text>
<rect x="745.2" y="578.4" width="37.8" height="19.2" rx="1.8" fill="url(#gBtn)" stroke="#b4b4b2" stroke-width="0.8"/>
<text x="764.1" y="590.5" font-family='"DejaVu Sans","Liberation Sans",sans-serif' font-size="6.4" fill="#3a3a3a" text-anchor="middle">Start Rec</text>
<path d="M694.5 388.7 v9.5 l2.2-2 1.6 3.6 1.4-0.6 -1.6-3.6 3-0.2z" fill="#111" stroke="#f4f4f4" stroke-width="0.6"/>
<rect x="0" y="600" width="792" height="16" fill="#e9e9e8"/>
<path d="M662 599.5H792" stroke="#c6c6c5" stroke-width="0.8" stroke-dasharray="3 2.6"/>
<rect x="0" y="615" width="792" height="1" fill="#9c9c9c"/>
<text x="4.8" y="610.8" font-family='"DejaVu Sans Mono","Liberation Mono",monospace' font-size="8.79" fill="#2a2a2a">Loaded sound: /home/olivier/Dropbox/private/snds/cacanne4.aiff,  Sr: 44100 Hz,  Channels: 2,  Duration: 8.004 sec</text>
<path d="M781 614.5l8.5-8.5M784 614.5l5.5-5.5M787 614.5l2.5-2.5" stroke="#a8a8a8" stroke-width="0.8"/>
</svg></body></html>
